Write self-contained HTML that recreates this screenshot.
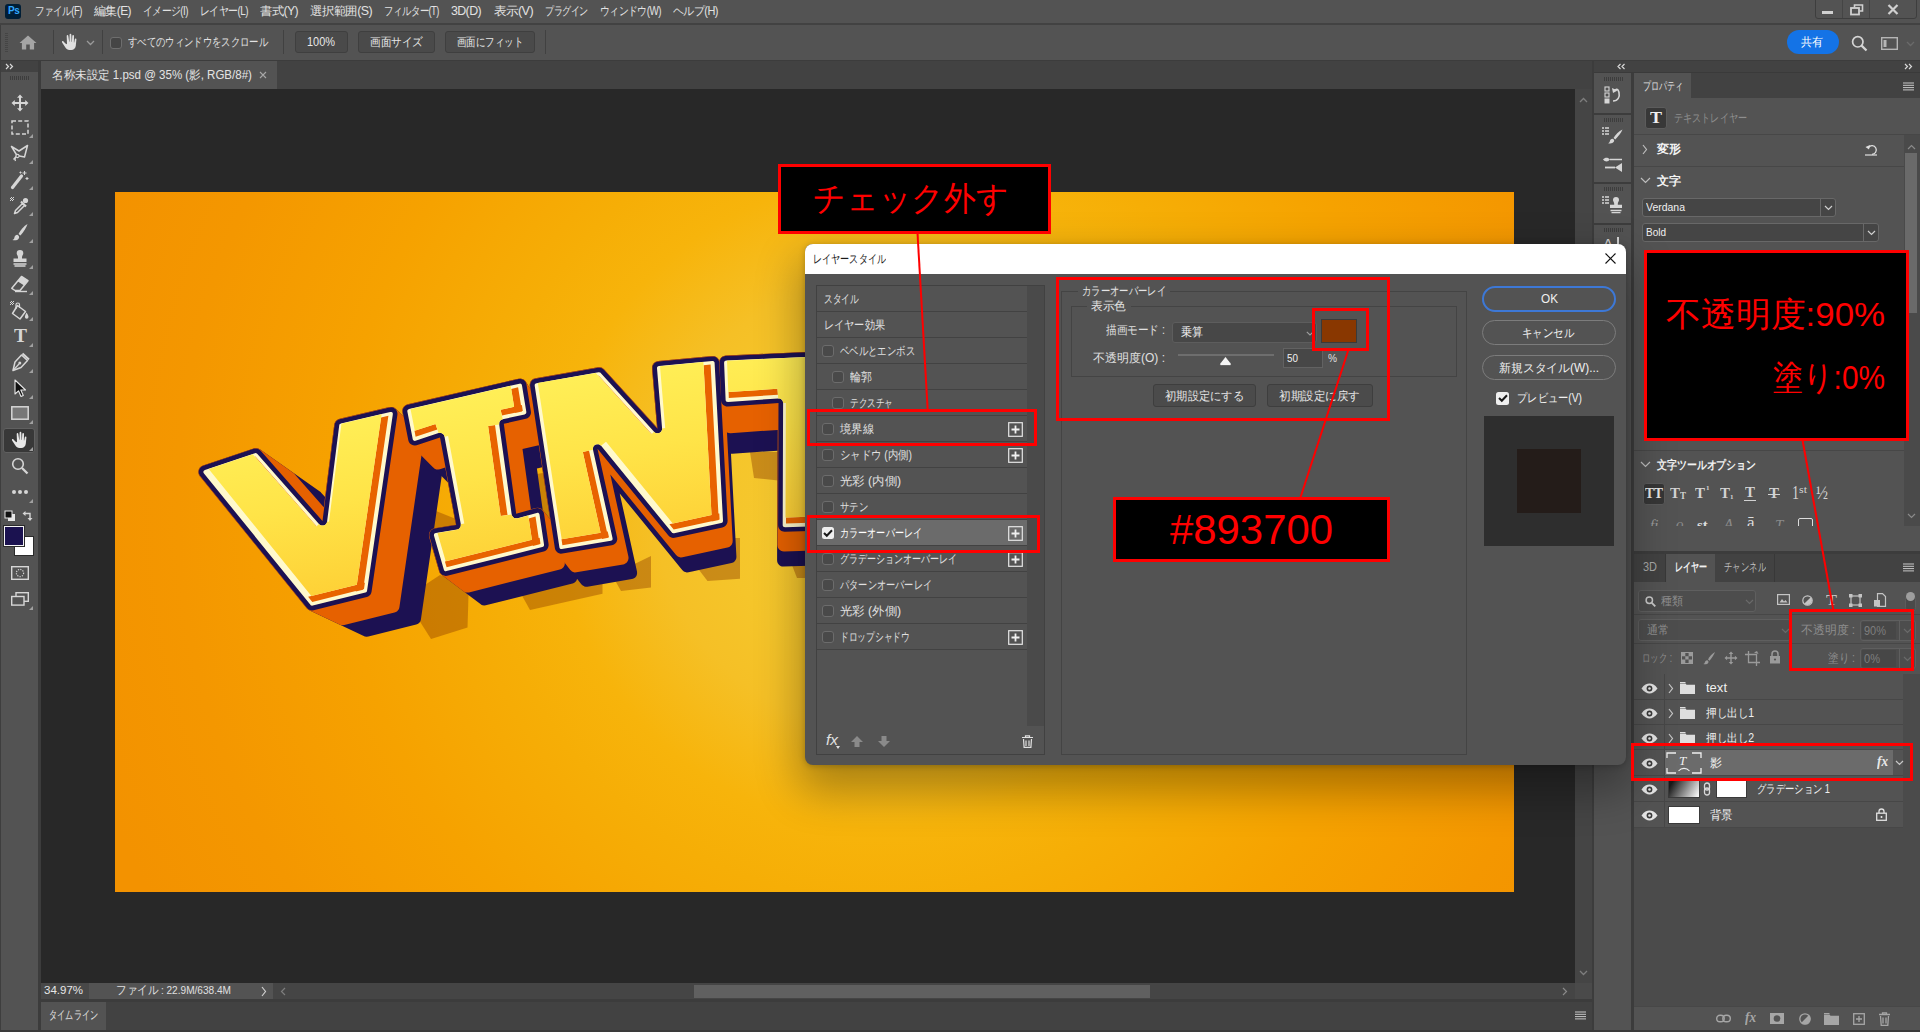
<!DOCTYPE html>
<html lang="ja">
<head>
<meta charset="utf-8">
<title>Photoshop - レイヤースタイル</title>
<style>
*{box-sizing:border-box;margin:0;padding:0}
html,body{width:1920px;height:1032px;overflow:hidden;background:#535353}
body{position:relative;font-family:"Liberation Sans",sans-serif;font-size:12px;color:#dcdcdc;line-height:1}
.a{position:absolute}
.t{position:absolute;white-space:nowrap;transform-origin:0 0;display:block}
svg{position:absolute;overflow:visible}
/* ---------- top bars ---------- */
#menubar{left:0;top:0;width:1920px;height:23px;background:#535353}
#menuline{left:0;top:23px;width:1920px;height:2px;background:#424242}
#optbar{left:0;top:25px;width:1920px;height:35px;background:#535353}
#optline{left:0;top:60px;width:1920px;height:1px;background:#3c3c3c}
#tabbar{left:41px;top:61px;width:1551px;height:28px;background:#424242}
#doctab{left:41px;top:61px;width:236px;height:28px;background:#535353}
.menu{top:5px;font-size:12px;color:#e2e2e2;letter-spacing:-0.6px}
/* ---------- left toolbar ---------- */
#tools{left:0;top:61px;width:38px;height:971px;background:#535353}
#toolshead{left:0;top:61px;width:38px;height:11px;background:#424242}
#toolgap{left:38px;top:61px;width:3px;height:971px;background:#3c3c3c}
/* ---------- canvas ---------- */
#canvas{left:41px;top:89px;width:1534px;height:894px;background:#282828;overflow:hidden}
#doc{left:74px;top:103px;width:1399px;height:700px;overflow:hidden;
 background:radial-gradient(circle 900px at 765px 312px,#f6cc35 0%,#f5c52a 18%,#f5c026 25%,#f7b40b 36%,#f6ae06 44%,#f6a200 60%,#f49700 78%,#f39200 92%)}
#vscroll{left:1575px;top:89px;width:17px;height:894px;background:#454545}
#status{left:41px;top:983px;width:1551px;height:16px;background:#454545}
#statusgap{left:41px;top:999px;width:1551px;height:3px;background:#3c3c3c}
#timeline{left:41px;top:1002px;width:1551px;height:28px;background:#424242}
#bottomline{left:0;top:1030px;width:1920px;height:2px;background:#3a3a3a}
/* ---------- right ---------- */
#rgap1{left:1592px;top:61px;width:2px;height:971px;background:#3c3c3c}
#iconstrip{left:1594px;top:61px;width:37px;height:971px;background:#535353}
#rgap2{left:1631px;top:61px;width:3px;height:971px;background:#3c3c3c}
#rpanel{left:1634px;top:61px;width:286px;height:971px;background:#535353}
/* ---------- annotations ---------- */
.ann{position:absolute;background:#000;border:3px solid #ff0000;color:#ff0000}
.rr{position:absolute;border:3px solid #ff0000}
</style>
</head>
<body>
<!-- ================= TOP BARS ================= -->
<div class="a" id="menubar"></div>
<div class="a" id="menuline"></div>
<div class="a" id="optbar"></div>
<div class="a" id="optline"></div>
<div class="a" id="tabbar"></div>
<div class="a" id="doctab"></div>
<!--MENU-->
<!-- Ps logo -->
<div class="a" style="left:5px;top:4px;width:16px;height:15px;background:#001e36;border-radius:3px"></div>
<span class="t" style="left:8px;top:6px;font-size:10px;font-weight:bold;color:#31a8ff;letter-spacing:-0.3px">Ps</span>
<!-- menu items -->
<span class="t menu" style="left:35px;--w:47;transform:scaleX(0.795)">ファイル(F)</span>
<span class="t menu" style="left:94px;--w:37;transform:scaleX(1.000)">編集(E)</span>
<span class="t menu" style="left:143px;--w:45;transform:scaleX(0.816)">イメージ(I)</span>
<span class="t menu" style="left:200px;--w:48;transform:scaleX(0.821)">レイヤー(L)</span>
<span class="t menu" style="left:260px;--w:38;transform:scaleX(1.027)">書式(Y)</span>
<span class="t menu" style="left:310px;--w:62;transform:scaleX(1.037)">選択範囲(S)</span>
<span class="t menu" style="left:384px;--w:55;transform:scaleX(0.780)">フィルター(T)</span>
<span class="t menu" style="left:451px;--w:30;transform:scaleX(1.034)">3D(D)</span>
<span class="t menu" style="left:494px;--w:39;transform:scaleX(1.054)">表示(V)</span>
<span class="t menu" style="left:545px;--w:43;transform:scaleX(0.754)">プラグイン</span>
<span class="t menu" style="left:600px;--w:61;transform:scaleX(0.818)">ウィンドウ(W)</span>
<span class="t menu" style="left:673px;--w:45;transform:scaleX(0.917)">ヘルプ(H)</span>
<!-- window buttons -->
<div class="a" style="left:1815px;top:-2px;width:102px;height:21px;border:1px solid #3e3e3e;border-radius:0 0 3px 3px"></div>
<div class="a" style="left:1842px;top:0;width:1px;height:18px;background:#454545"></div>
<div class="a" style="left:1869px;top:0;width:1px;height:18px;background:#454545"></div>
<div class="a" style="left:1822px;top:11px;width:11px;height:3px;background:#d0d0d0"></div>
<svg style="left:1850px;top:4px" width="14" height="12" viewBox="0 0 14 12"><path d="M4.5 3.5V1h8v6h-3" fill="none" stroke="#d0d0d0" stroke-width="1.6"/><rect x="1" y="4" width="8" height="6.5" fill="none" stroke="#d0d0d0" stroke-width="1.8"/></svg>
<svg style="left:1887px;top:4px" width="12" height="11" viewBox="0 0 12 11"><path d="M1.5 1l9 9M10.5 1l-9 9" stroke="#d0d0d0" stroke-width="2.2" fill="none"/></svg>
<!-- options bar -->
<div class="a" style="left:5px;top:33px;width:3px;height:20px;background:repeating-linear-gradient(#434343 0 1px,transparent 1px 2px);opacity:.9"></div>
<svg style="left:19px;top:35px" width="18" height="15" viewBox="0 0 18 15"><path d="M9 0.5L0.5 8h2.4v6.5h4.3V9.6h3.6v4.9h4.3V8h2.4z" fill="#a5a5a5"/></svg>
<div class="a" style="left:53px;top:30px;width:1px;height:24px;background:#414141"></div>
<svg style="left:61px;top:33px" width="18" height="18" viewBox="0 0 18 18"><path d="M4.4 10.6L2.3 8.3C1.6 7.6.5 8.5 1.1 9.4l3.3 5.2c.9 1.5 2.2 2.4 4 2.4h1.9c2.5 0 4.2-1.8 4.5-4.3l.6-6.3c.1-1.1-1.4-1.3-1.6-.2l-.6 3.2h-.3l.1-6.6c0-1.1-1.6-1.2-1.7 0l-.4 6.1h-.3L10.300 1.600c0-1.200-1.700-1.200-1.700 0l-.1 7.200h-.3L7.300 2.800c-.1-1.100-1.700-1-1.600.1l.3 8.400z" fill="#e0e0e0"/></svg>
<svg style="left:86px;top:40px" width="9" height="6" viewBox="0 0 9 6"><path d="M1 1l3.500 3.500L8 1" stroke="#9a9a9a" stroke-width="1.300" fill="none"/></svg>
<div class="a" style="left:102px;top:30px;width:1px;height:24px;background:#414141"></div>
<div class="a" style="left:110px;top:37px;width:12px;height:12px;background:#454545;border:1px solid #6e6e6e;border-radius:3px"></div>
<span class="t" style="left:128px;top:36px;font-size:12px;color:#e2e2e2;--w:140;transform:scaleX(0.778)">すべてのウィンドウをスクロール</span>
<div class="a" style="left:283px;top:30px;width:1px;height:24px;background:#414141"></div>
<div class="a" style="left:295px;top:31px;width:53px;height:22px;background:#4a4a4a;border:1px solid #3f3f3f;border-radius:3px"></div>
<span class="t" style="left:307px;top:36px;font-size:12px;color:#e8e8e8;--w:28;transform:scaleX(0.912)">100%</span>
<div class="a" style="left:358px;top:31px;width:77px;height:22px;background:#4a4a4a;border:1px solid #3f3f3f;border-radius:3px"></div>
<span class="t" style="left:370px;top:36px;font-size:12px;color:#e8e8e8;--w:53;transform:scaleX(0.883)">画面サイズ</span>
<div class="a" style="left:445px;top:31px;width:90px;height:22px;background:#4a4a4a;border:1px solid #3f3f3f;border-radius:3px"></div>
<span class="t" style="left:457px;top:36px;font-size:12px;color:#e8e8e8;--w:66;transform:scaleX(0.786)">画面にフィット</span>
<div class="a" style="left:545px;top:30px;width:1px;height:24px;background:#414141"></div>
<!-- share / search / workspace -->
<div class="a" style="left:1787px;top:30px;width:52px;height:24px;background:#1473e6;border-radius:12px"></div>
<span class="t" style="left:1801px;top:36px;font-size:12px;color:#fff;--w:22;transform:scaleX(0.917)">共有</span>
<svg style="left:1851px;top:35px" width="17" height="17" viewBox="0 0 17 17"><circle cx="6.800" cy="6.800" r="5.200" fill="none" stroke="#d5d5d5" stroke-width="1.700"/><path d="M10.600 10.600L15.500 15.500" stroke="#d5d5d5" stroke-width="2.200"/></svg>
<svg style="left:1881px;top:37px" width="17" height="13" viewBox="0 0 17 13"><rect x=".7" y=".7" width="15.600" height="11.600" fill="none" stroke="#b5b5b5" stroke-width="1.400"/><rect x="2.500" y="3" width="3" height="7" fill="#b5b5b5"/></svg>
<svg style="left:1906px;top:41px" width="9" height="6" viewBox="0 0 9 6"><path d="M1 1l3.500 3.500L8 1" stroke="#6a6a6a" stroke-width="1.300" fill="none"/></svg>
<!-- document tab -->
<span class="t" style="left:52px;top:69px;font-size:12px;color:#e4e4e4;--w:200;transform:scaleX(0.960)">名称未設定 1.psd @ 35% (影, RGB/8#)</span>
<svg style="left:259px;top:71px" width="8" height="8" viewBox="0 0 8 8"><path d="M1 1l6 6M7 1l-6 6" stroke="#a8a8a8" stroke-width="1.100"/></svg>

<!--/MENU-->

<!-- ================= LEFT TOOLBAR ================= -->
<div class="a" id="tools"></div>
<div class="a" id="toolshead"></div>
<div class="a" id="toolgap"></div>
<!--TOOLS-->
<div class="a" style="left:0;top:25px;width:1px;height:1007px;background:#3e3e3e"></div>
<svg style="left:5px;top:63px" width="9" height="7" viewBox="0 0 9 7"><path d="M1 1l2.500 2.500L1 6M5 1l2.500 2.500L5 6" stroke="#d8d8d8" stroke-width="1.200" fill="none"/></svg>
<div class="a" style="left:10px;top:76px;width:19px;height:4px;background:repeating-linear-gradient(90deg,#3d3d3d 0 1px,transparent 1px 2px)"></div>

<!-- move -->
<svg style="left:11px;top:94px" width="18" height="18" viewBox="0 0 18 18"><path d="M9 .5l3 3.300H10v4.200h4.200V6l3.300 3-3.300 3v-2H10v4.200h2l-3 3.300-3-3.300h2V10H3.800v2L.5 9l3.300-3v2H8V3.800H6z" fill="#d6d6d6"/></svg>
<!-- marquee -->
<svg style="left:11px;top:120px" width="18" height="15" viewBox="0 0 18 15"><rect x="1" y="1" width="16" height="13" fill="none" stroke="#d6d6d6" stroke-width="1.500" stroke-dasharray="4 2.200"/></svg>
<!-- lasso -->
<svg style="left:10px;top:144px" width="20" height="19" viewBox="0 0 20 19"><path d="M1.500 2.500l7.500 4.500 8.500-5.500-3 11.500-7.500-1.500z" fill="none" stroke="#d6d6d6" stroke-width="1.500" stroke-linejoin="round"/><path d="M7 11.500c-1.500 1.500-2.500 3.500-1.500 5.500M7 11.500l-3.500 4" stroke="#d6d6d6" stroke-width="1.300" fill="none"/><circle cx="7.500" cy="12" r="1.600" fill="#535353" stroke="#d6d6d6" stroke-width="1.100"/></svg>
<!-- magic wand -->
<svg style="left:10px;top:170px" width="20" height="20" viewBox="0 0 20 20"><path d="M2.500 17.500l9-11.500" stroke="#d6d6d6" stroke-width="3.200" stroke-linecap="round"/><path d="M14.500 1v4M12.500 3h4M17 7v3M15.500 8.500h3M10.500 1.500v2M9.500 2.500h2" stroke="#d6d6d6" stroke-width="1.100"/></svg>
<!-- eyedropper -->
<svg style="left:8px;top:196px" width="22" height="20" viewBox="0 0 22 20"><path d="M3 1h1v1H3zM5 1h1v1H5zM2 2h1v1H2zM4 2h1v1H4zM3 3h1v1H3zM5 3h1v1H5zM2 4h1v1H2zM4 4h1v1H4z" fill="#d6d6d6"/><path d="M6.500 17.500l1-3 7-7 2 2-7 7z" fill="none" stroke="#d6d6d6" stroke-width="1.500" stroke-linejoin="round"/><path d="M13 5.500l5 5" stroke="#d6d6d6" stroke-width="2.200"/><circle cx="17.500" cy="4.500" r="2.600" fill="#d6d6d6"/></svg>
<!-- brush -->
<svg style="left:11px;top:223px" width="18" height="18" viewBox="0 0 18 18"><path d="M16.500 1c-3.500 2-7 6-9 10l2 1.500c3-3.500 6-8 7-11.500z" fill="#d6d6d6"/><path d="M6.500 11.800c-2 .2-3 1.500-3.200 3.200-.2 1-1 1.700-2 2 2.500.8 5.500.3 6.600-1.800.6-1.300 0-2.600-1.400-3.400z" fill="#d6d6d6"/></svg>
<!-- stamp -->
<svg style="left:11px;top:249px" width="18" height="18" viewBox="0 0 18 18"><path d="M9 1a3.300 3.300 0 0 1 3.300 3.300c0 1.500-1.300 2.500-1.300 4v1.200h4.500v3.500h-13V9.500H7V8.300c0-1.500-1.300-2.500-1.300-4A3.300 3.300 0 0 1 9 1z" fill="#d6d6d6"/><path d="M2.500 15h13M3.500 17h11" stroke="#d6d6d6" stroke-width="1.300"/></svg>
<!-- eraser -->
<svg style="left:10px;top:275px" width="20" height="18" viewBox="0 0 20 18"><path d="M11.500 1.500l6.500 4.200-8 9.800H5l-3.200-2.200z" fill="none" stroke="#d6d6d6" stroke-width="1.500" stroke-linejoin="round"/><path d="M11.500 1.500l6.500 4.200-3.800 4.700-6.700-4.200z" fill="#d6d6d6"/><path d="M5 16.500h12" stroke="#d6d6d6" stroke-width="1.400"/></svg>
<!-- paint bucket -->
<svg style="left:8px;top:300px" width="22" height="20" viewBox="0 0 22 20"><path d="M3 1h1v1H3zM5 1h1v1H5zM2 2h1v1H2zM4 2h1v1H4zM3 3h1v1H3zM5 3h1v1H5zM2 4h1v1H2zM4 4h1v1H4z" fill="#d6d6d6"/><path d="M9.500 5.500l8 6-5.500 7.500-7.500-5.500z" fill="none" stroke="#d6d6d6" stroke-width="1.500" stroke-linejoin="round"/><path d="M8 9V4.500c0-2 3.500-2 3.500 0V8" fill="none" stroke="#d6d6d6" stroke-width="1.200"/><path d="M18.500 12.500c1.500 2.200 2 3.500 2 4.500a1.800 1.800 0 0 1-3.600 0c0-1 .5-2.300 1.600-4.500z" fill="#d6d6d6"/></svg>
<!-- type -->
<span class="t" style="left:14px;top:326px;font-family:'Liberation Serif',serif;font-weight:bold;font-size:19px;color:#d6d6d6;--w:13;transform:scaleX(1.025)">T</span>
<!-- pen -->
<svg style="left:11px;top:352px" width="19" height="20" viewBox="0 0 19 20"><path d="M2 18.500l2-8.500 6.500-7 6 5.500-6.500 7z" fill="none" stroke="#d6d6d6" stroke-width="1.500" stroke-linejoin="round"/><path d="M2 18.500l6-6.500" stroke="#d6d6d6" stroke-width="1.200"/><circle cx="8.800" cy="11" r="1.500" fill="#d6d6d6"/><path d="M11.500 1.500l6.500 6" stroke="#d6d6d6" stroke-width="2"/></svg>
<!-- path select arrow -->
<svg style="left:13px;top:379px" width="14" height="19" viewBox="0 0 14 19"><path d="M2 1v14l3.500-3.200 2.500 5.700 2.300-1-2.500-5.500H12.500z" fill="#111" stroke="#e6e6e6" stroke-width="1.100" stroke-linejoin="round"/></svg>
<!-- rectangle -->
<svg style="left:11px;top:406px" width="18" height="15" viewBox="0 0 18 15"><rect x=".8" y=".8" width="16.400" height="12.400" fill="#777" stroke="#d6d6d6" stroke-width="1.500"/></svg>
<!-- hand (selected) -->
<div class="a" style="left:3px;top:428px;width:32px;height:25px;background:#383838;border:1px solid #606060;border-radius:3px"></div>
<svg style="left:11px;top:431px" width="18" height="18" viewBox="0 0 18 18"><path d="M4.400 10.600L2.300 8.300C1.600 7.600.5 8.500 1.100 9.400l3.300 5.200c.9 1.500 2.200 2.400 4 2.400h1.900c2.500 0 4.200-1.800 4.500-4.300l.6-6.300c.1-1.100-1.400-1.300-1.600-.2l-.6 3.200h-.3l.1-6.600c0-1.100-1.600-1.200-1.700 0l-.4 6.100h-.3L10.300 1.600c0-1.200-1.700-1.200-1.700 0l-.1 7.200h-.3L7.300 2.800c-.1-1.100-1.700-1-1.600.1l.3 8.400z" fill="#e8e8e8"/></svg>
<!-- zoom -->
<svg style="left:11px;top:457px" width="18" height="18" viewBox="0 0 18 18"><circle cx="7" cy="7" r="5.300" fill="none" stroke="#d6d6d6" stroke-width="1.600"/><path d="M11 11l5.500 5.500" stroke="#d6d6d6" stroke-width="2.300"/></svg>
<!-- dots -->
<svg style="left:11px;top:489px" width="18" height="6" viewBox="0 0 18 6"><circle cx="3" cy="3" r="2" fill="#d6d6d6"/><circle cx="9" cy="3" r="2" fill="#d6d6d6"/><circle cx="15" cy="3" r="2" fill="#d6d6d6"/></svg>
<!-- small default/swap -->
<svg style="left:4px;top:510px" width="12" height="12" viewBox="0 0 12 12"><rect x="4" y="4" width="7" height="7" fill="#e8e8e8"/><rect x="1" y="1" width="7" height="7" fill="#111" stroke="#e8e8e8" stroke-width="1"/></svg>
<svg style="left:21px;top:510px" width="12" height="12" viewBox="0 0 12 12"><path d="M3.500 3.500H9V9" fill="none" stroke="#d6d6d6" stroke-width="1.400"/><path d="M4.500 1L1.500 3.500l3 2.500zM6.500 8L9 11l2.500-3z" fill="#d6d6d6"/></svg>
<!-- fg / bg -->
<div class="a" style="left:14px;top:536px;width:20px;height:20px;background:#fff;border:1px solid #2b2b2b"></div>
<div class="a" style="left:4px;top:526px;width:20px;height:20px;background:#1b1250;border:1.500px solid #f2f2f2;outline:1px solid #2b2b2b"></div>
<!-- quick mask -->
<svg style="left:11px;top:566px" width="18" height="14" viewBox="0 0 18 14"><rect x=".7" y=".7" width="16.600" height="12.600" fill="none" stroke="#d6d6d6" stroke-width="1.400"/><circle cx="9" cy="7" r="3.600" fill="none" stroke="#d6d6d6" stroke-width="1.200" stroke-dasharray="1.200 1.200"/></svg>
<!-- screen mode -->
<svg style="left:11px;top:592px" width="18" height="14" viewBox="0 0 18 14"><rect x="5" y=".7" width="12.300" height="8.600" fill="none" stroke="#d6d6d6" stroke-width="1.400"/><rect x=".7" y="4.500" width="12.300" height="8.600" fill="#535353" stroke="#d6d6d6" stroke-width="1.400"/></svg>

<svg style="left:29px;top:134px" width="4" height="4" viewBox="0 0 4 4"><path d="M4 0v4H0z" fill="#a0a0a0"/></svg>
<svg style="left:29px;top:160px" width="4" height="4" viewBox="0 0 4 4"><path d="M4 0v4H0z" fill="#a0a0a0"/></svg>
<svg style="left:29px;top:186px" width="4" height="4" viewBox="0 0 4 4"><path d="M4 0v4H0z" fill="#a0a0a0"/></svg>
<svg style="left:29px;top:212px" width="4" height="4" viewBox="0 0 4 4"><path d="M4 0v4H0z" fill="#a0a0a0"/></svg>
<svg style="left:29px;top:239px" width="4" height="4" viewBox="0 0 4 4"><path d="M4 0v4H0z" fill="#a0a0a0"/></svg>
<svg style="left:29px;top:265px" width="4" height="4" viewBox="0 0 4 4"><path d="M4 0v4H0z" fill="#a0a0a0"/></svg>
<svg style="left:29px;top:291px" width="4" height="4" viewBox="0 0 4 4"><path d="M4 0v4H0z" fill="#a0a0a0"/></svg>
<svg style="left:29px;top:317px" width="4" height="4" viewBox="0 0 4 4"><path d="M4 0v4H0z" fill="#a0a0a0"/></svg>
<svg style="left:29px;top:343px" width="4" height="4" viewBox="0 0 4 4"><path d="M4 0v4H0z" fill="#a0a0a0"/></svg>
<svg style="left:29px;top:369px" width="4" height="4" viewBox="0 0 4 4"><path d="M4 0v4H0z" fill="#a0a0a0"/></svg>
<svg style="left:29px;top:395px" width="4" height="4" viewBox="0 0 4 4"><path d="M4 0v4H0z" fill="#a0a0a0"/></svg>
<svg style="left:29px;top:420px" width="4" height="4" viewBox="0 0 4 4"><path d="M4 0v4H0z" fill="#a0a0a0"/></svg>
<svg style="left:29px;top:447px" width="4" height="4" viewBox="0 0 4 4"><path d="M4 0v4H0z" fill="#a0a0a0"/></svg>
<svg style="left:29px;top:499px" width="4" height="4" viewBox="0 0 4 4"><path d="M4 0v4H0z" fill="#a0a0a0"/></svg>
<svg style="left:29px;top:606px" width="4" height="4" viewBox="0 0 4 4"><path d="M4 0v4H0z" fill="#a0a0a0"/></svg>

<!--/TOOLS-->

<!-- ================= CANVAS ================= -->
<div class="a" id="canvas">
  <div class="a" id="doc">
<!--ART-->
<svg class="a" style="left:0;top:0" width="1399" height="700" viewBox="115 192 1399 700">
<defs><linearGradient id="fg" gradientUnits="userSpaceOnUse" x1="500" y1="352" x2="545" y2="612"><stop offset="0" stop-color="#fff35d"/><stop offset="0.45" stop-color="#ffe448"/><stop offset="1" stop-color="#fdc62c"/></linearGradient></defs>
<g fill="#8f3d00" fill-opacity="0.42"><path d="M405.0,598.0 431.0,639.0 467.5,627.5 468.8,585.0 440.0,575.0Z"/><path d="M416.0,503.0 456.0,519.0 453.0,536.0 424.0,546.0Z"/><path d="M520.0,592.0 530.0,610.0 602.5,593.8 602.5,572.0 560.0,578.0Z"/><path d="M537.0,474.0 548.0,472.0 552.0,523.0 541.0,525.0Z"/><path d="M612.0,575.0 621.0,591.0 651.0,587.5 651.0,556.0Z"/><path d="M696.0,566.0 707.5,581.0 740.0,578.8 740.0,538.0 728.0,538.0Z"/><path d="M750.0,452.0 783.0,452.0 783.0,481.0 754.0,478.0Z"/><path d="M790.0,560.0 860.0,560.0 860.0,578.0 797.0,578.0Z"/></g>
<path fill="#1c1152" d="M200.0,467.5 200.0,467.5 199.9,467.5 199.9,467.5 199.0,469.1 198.9,469.1 198.9,469.1 198.9,469.2 198.4,470.9 198.4,470.9 198.4,470.9 198.4,471.0 198.4,472.8 198.4,472.8 198.4,472.8 198.4,472.9 198.9,474.6 198.9,474.6 198.9,474.7 198.9,474.7 199.8,476.2 199.9,476.3 306.7,608.2 306.7,608.2 308.1,609.5 308.1,609.5 308.1,609.5 308.2,609.6 309.8,610.4 309.8,610.4 364.8,636.4 364.8,636.4 364.9,636.4 364.9,636.4 366.5,636.7 366.6,636.7 366.6,636.7 366.7,636.7 368.3,636.5 368.4,636.5 416.2,624.6 416.2,624.6 417.5,624.1 417.6,624.1 417.6,624.1 418.7,623.3 418.8,623.3 418.8,623.3 419.7,622.2 419.8,622.2 419.8,622.2 420.5,620.9 420.5,620.9 420.5,620.9 420.9,619.5 420.9,619.5 444.0,460.3 444.0,460.2 444.1,458.6 444.1,458.6 444.1,458.5 444.0,458.5 443.6,456.9 443.6,456.9 443.6,456.9 443.6,456.8 442.7,455.5 442.7,455.4 442.7,455.4 396.2,409.3 396.2,409.3 394.9,408.1 394.9,408.1 394.8,408.1 394.8,408.1 393.2,407.2 393.2,407.2 393.1,407.2 393.1,407.2 391.3,406.9 391.3,406.9 391.3,406.9 391.2,406.9 389.4,407.0 389.4,407.1 339.5,418.8 339.4,418.9 338.0,419.4 337.9,419.4 337.9,419.4 336.6,420.3 336.5,420.4 336.5,420.4 335.5,421.6 335.4,421.6 335.4,421.6 334.7,423.0 334.6,423.1 334.6,423.1 334.2,424.6 334.2,424.7 325.1,497.1 320.9,492.4 320.9,492.3 319.6,491.2 319.5,491.2 259.5,449.1 259.4,449.1 259.4,449.1 257.6,448.3 257.6,448.3 257.6,448.3 257.5,448.3 255.6,448.1 255.6,448.1 255.6,448.1 255.5,448.1 253.7,448.4 253.6,448.4 203.0,465.4 203.0,465.4 201.4,466.2 201.4,466.2 201.3,466.2 201.3,466.3Z"/>
<path fill="#1c1152" d="M402.3,410.5 402.3,410.6 402.3,410.6 402.3,410.6 402.4,412.3 402.4,412.3 407.9,440.4 407.9,440.4 408.5,442.1 408.5,442.2 408.5,442.2 408.5,442.2 409.6,443.7 409.6,443.8 409.6,443.8 447.9,482.4 455.8,524.7 434.6,528.2 434.6,528.2 432.8,528.8 432.8,528.8 432.8,528.8 432.7,528.8 431.2,529.8 431.2,529.8 431.2,529.9 431.1,529.9 430.0,531.3 429.9,531.3 429.9,531.3 429.9,531.4 429.2,533.0 429.1,533.1 429.1,533.1 429.1,533.1 428.9,534.9 428.9,535.0 428.9,535.0 428.9,535.1 429.1,536.9 429.1,536.9 439.1,571.3 439.1,571.3 439.8,572.9 439.8,572.9 439.8,572.9 439.8,572.9 440.9,574.3 440.9,574.3 440.9,574.3 440.9,574.3 442.2,575.3 442.2,575.3 481.1,604.6 481.1,604.6 481.2,604.7 481.2,604.7 482.6,605.2 482.6,605.3 482.6,605.3 482.7,605.3 484.1,605.5 484.2,605.5 484.2,605.5 484.2,605.5 485.7,605.3 485.8,605.3 572.5,583.5 572.6,583.5 573.9,583.0 573.9,583.0 574.0,582.9 574.0,582.9 575.2,582.1 575.2,582.1 575.2,582.1 575.2,582.0 576.2,580.9 576.2,580.9 576.2,580.9 576.2,580.9 576.9,579.6 576.9,579.6 576.9,579.5 576.9,579.5 577.2,578.1 577.2,578.1 577.2,578.0 577.2,578.0 577.2,576.6 577.2,576.5 573.1,549.0 573.1,549.0 572.6,547.4 572.6,547.3 572.6,547.3 572.6,547.3 571.7,545.9 571.6,545.9 542.8,510.1 542.8,510.1 542.7,510.0 542.7,510.0 536.9,468.5 556.5,464.1 556.6,464.1 557.9,463.6 558.0,463.6 558.0,463.6 558.0,463.5 559.2,462.7 559.3,462.7 559.3,462.7 559.3,462.6 560.3,461.5 560.3,461.5 560.3,461.5 560.3,461.4 561.0,460.1 561.0,460.1 561.0,460.1 561.0,460.0 561.4,458.6 561.4,458.6 561.4,458.5 561.4,458.5 561.3,457.0 561.3,457.0 557.3,432.7 557.3,432.6 556.9,431.1 556.9,431.1 556.8,431.0 556.8,431.0 526.3,382.5 526.3,382.5 525.4,381.0 525.3,381.0 525.3,380.9 525.3,380.9 524.0,379.7 523.9,379.7 523.9,379.7 523.9,379.7 522.3,378.9 522.3,378.9 522.2,378.9 522.2,378.9 520.5,378.5 520.4,378.5 520.4,378.5 520.4,378.5 518.6,378.7 518.5,378.7 407.6,404.3 407.6,404.3 406.0,404.9 406.0,404.9 406.0,404.9 405.9,404.9 404.6,405.9 404.5,405.9 404.5,405.9 404.5,406.0 403.4,407.2 403.4,407.3 403.4,407.3 403.4,407.3 402.6,408.8 402.6,408.8 402.6,408.9 402.6,408.9Z"/>
<path fill="#1c1152" d="M656.5,361.5 656.5,361.5 656.4,361.5 656.4,361.5 654.9,362.3 654.9,362.3 654.9,362.3 654.8,362.4 653.6,363.5 653.6,363.5 653.5,363.5 653.5,363.6 652.6,365.0 652.6,365.0 652.6,365.1 652.6,365.1 652.1,366.7 652.1,366.7 652.0,366.8 652.0,366.8 652.0,368.5 652.0,368.5 657.0,427.6 604.2,369.5 604.2,369.5 603.0,368.4 602.9,368.4 602.9,368.4 602.9,368.3 601.4,367.6 601.4,367.6 601.4,367.6 601.3,367.6 599.7,367.3 599.7,367.3 599.7,367.3 599.6,367.3 598.0,367.3 597.9,367.3 535.4,378.3 535.3,378.3 533.7,378.8 533.7,378.8 533.7,378.8 533.6,378.8 532.2,379.7 532.2,379.8 532.2,379.8 532.1,379.8 531.0,381.0 531.0,381.1 531.0,381.1 530.9,381.1 530.1,382.6 530.1,382.6 530.1,382.6 530.1,382.7 529.7,384.3 529.7,384.3 529.7,384.4 529.7,384.4 529.7,386.1 529.7,386.1 554.5,548.3 554.5,548.3 555.0,550.0 555.0,550.0 555.0,550.0 555.0,550.1 555.9,551.5 555.9,551.6 581.5,584.4 581.5,584.5 581.6,584.5 582.7,585.5 582.7,585.6 582.7,585.6 582.8,585.6 584.1,586.3 584.2,586.3 584.2,586.4 584.2,586.4 585.7,586.7 585.8,586.7 585.8,586.7 585.8,586.7 587.4,586.7 587.4,586.7 631.9,579.1 632.0,579.1 633.5,578.6 633.5,578.6 633.6,578.6 633.6,578.6 634.9,577.7 634.9,577.7 635.0,577.7 635.0,577.7 636.0,576.5 636.1,576.5 636.1,576.4 636.1,576.4 636.8,575.0 636.8,575.0 636.8,574.9 636.8,574.9 637.1,573.3 637.1,573.3 637.1,573.3 637.1,573.2 637.0,571.7 637.0,571.6 619.7,493.4 682.4,570.2 682.5,570.2 683.6,571.3 683.7,571.3 683.7,571.4 683.7,571.4 685.2,572.1 685.2,572.1 685.2,572.1 685.3,572.1 686.8,572.5 686.9,572.5 686.9,572.5 686.9,572.5 688.5,572.3 688.6,572.3 731.5,563.0 731.5,563.0 733.1,562.4 733.1,562.4 733.2,562.4 733.2,562.4 734.5,561.4 734.5,561.4 734.6,561.4 734.6,561.3 735.6,560.0 735.6,560.0 735.6,560.0 735.6,559.9 736.2,558.4 736.2,558.4 736.3,558.3 736.3,558.3 736.4,556.7 736.4,556.6 728.9,414.3 728.9,414.3 719.6,362.5 719.6,362.5 719.3,360.8 719.3,360.8 719.3,360.7 719.3,360.7 718.5,359.1 718.5,359.1 718.5,359.1 718.4,359.1 717.3,357.8 717.3,357.7 717.2,357.7 717.2,357.7 715.7,356.7 715.7,356.7 715.7,356.7 715.6,356.7 714.0,356.2 714.0,356.1 713.9,356.1 713.9,356.1 712.1,356.1 712.1,356.1 658.2,361.1 658.2,361.1Z"/>
<path fill="#1c1152" d="M719.3,360.9 719.3,361.0 719.3,361.0 719.3,361.0 719.1,362.7 719.1,362.8 720.6,400.3 720.6,400.3 725.7,447.9 725.7,447.9 726.0,449.4 726.0,449.5 726.0,449.5 726.0,449.5 726.7,451.0 726.7,451.0 726.7,451.0 726.7,451.0 727.7,452.2 727.8,452.3 727.8,452.3 727.8,452.3 729.1,453.2 729.1,453.2 729.2,453.2 729.2,453.2 730.7,453.7 730.7,453.7 730.8,453.7 730.8,453.7 732.3,453.8 732.4,453.8 777.4,450.7 777.1,560.3 777.1,560.4 777.3,561.9 777.3,562.0 777.3,562.0 777.3,562.0 777.9,563.5 777.9,563.5 778.0,563.6 778.0,563.6 778.9,564.8 779.0,564.8 779.0,564.9 779.0,564.9 780.3,565.8 780.3,565.8 780.3,565.8 780.4,565.9 781.8,566.4 781.9,566.4 781.9,566.4 781.9,566.5 783.5,566.6 783.5,566.6 834.5,565.0 834.6,565.0 836.1,564.7 836.1,564.7 836.1,564.7 836.2,564.7 837.5,564.1 837.6,564.1 837.6,564.1 837.6,564.0 838.8,563.1 838.8,563.1 838.9,563.0 838.9,563.0 839.8,561.8 839.8,561.8 839.8,561.7 839.8,561.7 840.4,560.3 840.4,560.3 840.4,560.2 847.9,525.1 847.9,525.1 848.1,523.4 848.1,523.4 847.1,448.7 883.0,448.7 883.1,448.7 884.6,448.5 884.6,448.5 884.6,448.5 884.7,448.5 886.1,447.9 886.1,447.9 886.2,447.9 886.2,447.8 887.4,446.9 887.4,446.9 887.4,446.9 887.5,446.8 888.4,445.6 888.4,445.6 888.4,445.6 888.4,445.5 889.0,444.1 889.0,444.1 902.0,396.1 902.0,396.0 902.2,394.3 902.3,394.3 902.4,354.7 902.4,354.7 902.2,352.9 902.1,352.9 902.1,352.9 902.1,352.8 901.4,351.2 901.4,351.2 901.4,351.2 901.4,351.1 900.3,349.8 900.3,349.7 900.2,349.7 900.2,349.7 898.8,348.7 898.8,348.6 898.7,348.6 898.7,348.6 897.1,348.0 897.0,348.0 897.0,348.0 897.0,348.0 895.2,347.8 895.2,347.8 725.7,355.6 725.7,355.6 724.0,355.9 724.0,355.9 723.9,355.9 723.9,355.9 722.4,356.6 722.3,356.7 722.3,356.7 722.3,356.7 721.0,357.8 721.0,357.8 720.9,357.8 720.9,357.9 719.9,359.2 719.9,359.3 719.9,359.3 719.9,359.3Z"/>
<path fill="#e66100" d="M200.0,467.5 200.0,467.5 199.9,467.5 199.9,467.5 199.0,469.1 198.9,469.1 198.9,469.1 198.9,469.2 198.4,470.9 198.4,470.9 198.4,470.9 198.4,471.0 198.4,472.8 198.4,472.8 198.4,472.8 198.4,472.9 198.9,474.6 198.9,474.6 198.9,474.7 198.9,474.7 199.8,476.2 199.9,476.3 306.7,608.2 306.7,608.2 308.1,609.5 308.1,609.5 308.1,609.5 308.2,609.6 309.8,610.4 309.8,610.4 340.6,624.9 340.6,625.0 340.7,625.0 340.7,625.0 342.4,625.3 342.5,625.3 342.5,625.3 342.5,625.3 344.3,625.1 344.3,625.1 394.5,612.6 394.5,612.6 395.9,612.1 395.9,612.1 396.0,612.1 397.2,611.2 397.2,611.2 397.2,611.2 398.2,610.1 398.2,610.1 398.3,610.0 399.0,608.8 399.0,608.7 399.0,608.7 399.4,607.3 399.4,607.2 423.7,440.3 423.7,440.2 423.7,438.5 423.7,438.5 423.7,438.4 423.7,438.4 423.2,436.8 423.2,436.7 423.2,436.7 423.2,436.7 422.3,435.2 422.3,435.2 422.2,435.1 396.2,409.3 396.2,409.3 394.9,408.1 394.9,408.1 394.8,408.1 394.8,408.1 393.2,407.2 393.2,407.2 393.1,407.2 393.1,407.2 391.3,406.9 391.3,406.9 391.3,406.9 391.2,406.9 389.4,407.0 389.4,407.1 339.5,418.8 339.4,418.9 338.0,419.4 337.9,419.4 337.9,419.4 336.6,420.3 336.5,420.4 336.5,420.4 335.5,421.6 335.4,421.6 335.4,421.6 334.7,423.0 334.6,423.1 334.6,423.1 334.2,424.6 334.2,424.7 323.8,507.2 294.5,473.9 294.5,473.9 293.1,472.7 293.1,472.7 259.5,449.1 259.4,449.1 259.4,449.1 257.6,448.3 257.6,448.3 257.6,448.3 257.5,448.3 255.6,448.1 255.6,448.1 255.6,448.1 255.5,448.1 253.7,448.4 253.6,448.4 203.0,465.4 203.0,465.4 201.4,466.2 201.4,466.2 201.3,466.2 201.3,466.3Z"/>
<path fill="#e66100" d="M402.3,410.5 402.3,410.6 402.3,410.6 402.3,410.6 402.4,412.3 402.4,412.3 407.9,440.4 407.9,440.4 408.5,442.1 408.5,442.2 408.5,442.2 408.5,442.2 409.6,443.7 409.6,443.8 409.6,443.8 433.2,467.6 433.3,467.6 434.6,468.7 434.6,468.7 434.7,468.7 434.7,468.7 436.3,469.4 436.3,469.4 436.4,469.4 436.4,469.4 438.1,469.6 438.2,469.6 438.2,469.6 438.3,469.6 440.0,469.3 440.0,469.3 445.2,467.6 455.8,524.7 434.6,528.2 434.6,528.2 432.8,528.8 432.8,528.8 432.8,528.8 432.7,528.8 431.2,529.8 431.2,529.8 431.2,529.9 431.1,529.9 430.0,531.3 429.9,531.3 429.9,531.3 429.9,531.4 429.2,533.0 429.1,533.1 429.1,533.1 429.1,533.1 428.9,534.9 428.9,535.0 428.9,535.0 428.9,535.1 429.1,536.9 429.1,536.9 439.1,571.3 439.1,571.3 439.8,572.9 439.8,572.9 439.8,572.9 439.8,572.9 440.9,574.3 440.9,574.3 440.9,574.3 440.9,574.3 442.2,575.3 442.2,575.3 464.0,591.7 464.0,591.8 464.1,591.8 464.1,591.8 465.5,592.4 465.6,592.4 465.6,592.4 465.6,592.4 467.2,592.6 467.2,592.6 467.3,592.6 467.3,592.6 468.8,592.4 468.9,592.4 559.9,569.6 559.9,569.6 561.3,569.0 561.4,569.0 561.4,569.0 561.4,569.0 562.7,568.1 562.7,568.1 562.7,568.1 562.7,568.0 563.7,566.9 563.7,566.9 563.7,566.8 563.8,566.8 564.4,565.5 564.4,565.4 564.5,565.4 564.5,565.4 564.8,563.9 564.8,563.9 564.8,563.9 564.8,563.8 564.8,562.3 564.8,562.3 560.5,533.4 560.4,533.4 560.0,531.7 559.9,531.7 559.9,531.6 559.9,531.6 559.0,530.2 558.9,530.1 542.8,510.1 542.8,510.1 542.7,510.0 541.4,508.8 541.3,508.8 541.3,508.8 541.3,508.8 539.6,508.0 539.6,508.0 539.5,508.0 539.5,508.0 537.7,507.7 537.7,507.7 537.6,507.7 537.6,507.7 535.8,507.9 535.7,507.9 530.9,509.3 522.5,448.9 543.1,444.3 543.1,444.3 544.6,443.8 544.6,443.8 544.6,443.8 544.7,443.7 545.9,442.9 546.0,442.9 546.0,442.8 546.0,442.8 547.0,441.6 547.1,441.6 547.1,441.6 547.1,441.6 547.8,440.2 547.8,440.2 547.8,440.1 547.8,440.1 548.2,438.6 548.2,438.6 548.2,438.5 548.2,438.5 548.1,436.9 548.1,436.9 544.0,411.4 543.9,411.4 543.4,409.8 543.4,409.7 543.4,409.7 543.4,409.7 526.3,382.5 526.3,382.5 525.4,381.0 525.3,381.0 525.3,380.9 525.3,380.9 524.0,379.7 523.9,379.7 523.9,379.7 523.9,379.7 522.3,378.9 522.3,378.9 522.2,378.9 522.2,378.9 520.5,378.5 520.4,378.5 520.4,378.5 520.4,378.5 518.6,378.7 518.5,378.7 407.6,404.3 407.6,404.3 406.0,404.9 406.0,404.9 406.0,404.9 405.9,404.9 404.6,405.9 404.5,405.9 404.5,405.9 404.5,406.0 403.4,407.2 403.4,407.3 403.4,407.3 403.4,407.3 402.6,408.8 402.6,408.8 402.6,408.9 402.6,408.9Z"/>
<path fill="#e66100" d="M656.5,361.5 656.5,361.5 656.4,361.5 656.4,361.5 654.9,362.3 654.9,362.3 654.9,362.3 654.8,362.4 653.6,363.5 653.6,363.5 653.5,363.5 653.5,363.6 652.6,365.0 652.6,365.0 652.6,365.1 652.6,365.1 652.1,366.7 652.1,366.7 652.0,366.8 652.0,366.8 652.0,368.5 652.0,368.5 657.0,427.6 604.2,369.5 604.2,369.5 603.0,368.4 602.9,368.4 602.9,368.4 602.9,368.3 601.4,367.6 601.4,367.6 601.4,367.6 601.3,367.6 599.7,367.3 599.7,367.3 599.7,367.3 599.6,367.3 598.0,367.3 597.9,367.3 535.4,378.3 535.3,378.3 533.7,378.8 533.7,378.8 533.7,378.8 533.6,378.8 532.2,379.7 532.2,379.8 532.2,379.8 532.1,379.8 531.0,381.0 531.0,381.1 531.0,381.1 530.9,381.1 530.1,382.6 530.1,382.6 530.1,382.6 530.1,382.7 529.7,384.3 529.7,384.3 529.7,384.4 529.7,384.4 529.7,386.1 529.7,386.1 554.5,548.3 554.5,548.3 555.0,550.0 555.0,550.0 555.0,550.0 555.0,550.1 555.9,551.5 555.9,551.6 570.3,570.0 570.3,570.0 570.3,570.0 571.5,571.1 571.5,571.2 571.5,571.2 571.6,571.2 573.0,572.0 573.0,572.0 573.1,572.0 573.1,572.0 574.7,572.4 574.7,572.4 574.7,572.4 574.8,572.4 576.4,572.3 576.4,572.3 623.1,564.4 623.2,564.4 624.8,563.9 624.8,563.9 624.8,563.9 624.8,563.8 626.2,562.9 626.3,562.9 626.3,562.9 626.3,562.9 627.4,561.6 627.4,561.6 627.5,561.6 627.5,561.5 628.2,560.1 628.2,560.0 628.2,560.0 628.2,560.0 628.5,558.3 628.6,558.3 628.6,558.3 628.6,558.2 628.4,556.6 628.4,556.5 610.3,474.5 676.1,555.0 676.1,555.1 677.4,556.2 677.4,556.2 677.4,556.3 677.5,556.3 679.0,557.0 679.0,557.1 679.0,557.1 679.1,557.1 680.7,557.4 680.7,557.4 680.8,557.4 680.8,557.4 682.5,557.3 682.5,557.3 727.5,547.5 727.6,547.5 729.2,546.9 729.3,546.9 729.3,546.9 729.3,546.9 730.7,545.8 730.7,545.8 730.8,545.8 730.8,545.7 731.8,544.4 731.9,544.3 731.9,544.3 731.9,544.3 732.5,542.7 732.5,542.6 732.5,542.6 732.5,542.6 732.7,540.8 732.7,540.8 724.8,391.5 724.8,391.5 719.6,362.5 719.6,362.5 719.3,360.8 719.3,360.8 719.3,360.7 719.3,360.7 718.5,359.1 718.5,359.1 718.5,359.1 718.4,359.1 717.3,357.8 717.3,357.7 717.2,357.7 717.2,357.7 715.7,356.7 715.7,356.7 715.7,356.7 715.6,356.7 714.0,356.2 714.0,356.1 713.9,356.1 713.9,356.1 712.1,356.1 712.1,356.1 658.2,361.1 658.2,361.1Z"/>
<path fill="#e66100" d="M719.3,360.9 719.3,361.0 719.3,361.0 719.3,361.0 719.1,362.7 719.1,362.8 720.6,400.3 720.6,400.3 723.5,427.0 723.5,427.0 723.8,428.6 723.8,428.6 723.8,428.7 723.8,428.7 724.5,430.2 724.5,430.2 724.5,430.2 724.5,430.3 725.6,431.5 725.6,431.5 725.7,431.5 725.7,431.6 727.0,432.5 727.1,432.5 727.1,432.5 727.1,432.5 728.7,433.1 728.7,433.1 728.7,433.1 728.8,433.1 730.4,433.2 730.5,433.2 777.7,429.9 777.4,544.9 777.4,545.0 777.6,546.6 777.6,546.6 777.6,546.7 777.6,546.7 778.2,548.2 778.3,548.2 778.3,548.3 778.3,548.3 779.3,549.6 779.3,549.6 779.4,549.6 779.4,549.7 780.7,550.6 780.7,550.6 780.8,550.7 780.8,550.7 782.3,551.3 782.3,551.3 782.4,551.3 782.4,551.3 784.0,551.5 784.1,551.5 837.6,549.8 837.6,549.8 839.2,549.5 839.2,549.5 839.3,549.5 839.3,549.5 840.7,548.8 840.8,548.8 840.8,548.8 840.8,548.8 842.1,547.8 842.1,547.8 842.1,547.7 842.1,547.7 843.1,546.4 843.1,546.4 843.1,546.4 843.1,546.3 843.7,544.9 843.7,544.8 843.7,544.8 847.9,525.1 847.9,525.1 848.1,523.4 848.1,523.4 846.8,427.8 888.4,427.8 888.5,427.8 890.1,427.6 890.1,427.6 890.2,427.6 890.2,427.5 891.7,426.9 891.7,426.9 891.7,426.9 891.7,426.9 893.0,425.9 893.0,425.9 893.1,425.9 893.1,425.8 894.1,424.6 894.1,424.5 894.1,424.5 894.1,424.5 894.7,423.0 894.8,423.0 902.0,396.1 902.0,396.0 902.2,394.3 902.3,394.3 902.4,354.7 902.4,354.7 902.2,352.9 902.1,352.9 902.1,352.9 902.1,352.8 901.4,351.2 901.4,351.2 901.4,351.2 901.4,351.1 900.3,349.8 900.3,349.7 900.2,349.7 900.2,349.7 898.8,348.7 898.8,348.6 898.7,348.6 898.7,348.6 897.1,348.0 897.0,348.0 897.0,348.0 897.0,348.0 895.2,347.8 895.2,347.8 725.7,355.6 725.7,355.6 724.0,355.9 724.0,355.9 723.9,355.9 723.9,355.9 722.4,356.6 722.3,356.7 722.3,356.7 722.3,356.7 721.0,357.8 721.0,357.8 720.9,357.8 720.9,357.9 719.9,359.2 719.9,359.3 719.9,359.3 719.9,359.3Z"/>
<path fill="#1c1152" d="M203.2,465.8 201.6,466.6 200.2,467.8 199.3,469.3 198.8,471.0 198.8,472.8 199.3,474.5 200.2,476.0 307.0,607.9 308.3,609.2 310.0,610.0 311.8,610.4 313.6,610.2 366.8,597.0 368.2,596.4 369.5,595.5 370.5,594.4 371.2,593.1 371.6,591.6 397.4,414.7 397.4,412.9 396.9,411.2 396.0,409.6 394.6,408.4 393.0,407.6 391.3,407.3 389.5,407.4 339.6,419.2 338.1,419.8 336.8,420.7 335.8,421.8 335.0,423.2 334.6,424.7 322.5,521.0 260.7,450.7 259.2,449.5 257.5,448.7 255.6,448.5 253.7,448.8Z"/>
<path fill="#fff9cc" d="M204.9,470.0 204.2,470.4 203.8,470.7 203.5,471.2 203.4,471.7 203.4,472.2 203.5,472.7 204.0,473.4 310.4,604.8 311.0,605.4 311.5,605.6 312.0,605.7 312.8,605.6 365.4,592.6 366.1,592.3 366.4,592.1 366.7,591.7 366.9,591.3 367.1,590.6 392.8,414.4 392.8,413.5 392.7,413.0 392.4,412.6 392.0,412.2 391.5,412.0 391.0,411.9 390.2,412.0 340.9,423.6 340.2,423.9 339.8,424.1 339.5,424.5 339.3,424.9 339.2,425.6 327.1,521.6 327.0,522.0 326.9,522.5 326.7,522.9 326.5,523.3 326.2,523.7 325.9,524.0 325.6,524.4 325.3,524.7 324.9,524.9 324.5,525.1 324.1,525.3 323.6,525.5 323.2,525.5 322.7,525.6 322.3,525.6 321.8,525.5 321.4,525.5 320.9,525.3 320.5,525.1 320.1,524.9 319.7,524.7 319.4,524.4 319.0,524.0 257.4,454.0 256.8,453.4 256.3,453.2 255.7,453.1 254.9,453.3Z"/>
<path fill="#e86300" d="M316.3,526.4 316.6,526.2 255.4,456.6 255.0,456.7ZM356.8,584.7 308.1,596.8 312.3,601.9 355.8,591.1 355.8,591.5 363.1,589.7 363.2,589.3 364.0,589.1 364.9,582.6 364.1,582.9 388.4,415.8 381.1,417.5Z"/>
<path fill="url(#fg)" d="M327.0,522.0 326.9,522.5 326.7,522.9 326.5,523.3 326.2,523.7 325.9,524.0 325.6,524.4 325.3,524.7 324.9,524.9 324.5,525.1 324.1,525.3 323.6,525.5 323.2,525.5 322.7,525.6 322.3,525.6 321.8,525.5 321.4,525.5 320.9,525.3 320.5,525.1 320.1,524.9 319.7,524.7 319.4,524.4 319.0,524.0 316.3,526.4 252.8,454.3 208.7,469.0 311.4,596.0 356.8,584.7 381.6,414.2 341.4,423.7 329.0,521.8 327.1,521.6Z"/>
<path fill="#1c1152" d="M407.7,404.7 406.2,405.3 404.8,406.2 403.7,407.5 403.0,409.0 402.7,410.6 402.8,412.3 408.3,440.3 408.9,442.0 409.9,443.5 411.4,444.6 413.1,445.3 414.9,445.5 416.7,445.2 440.0,437.5 456.2,525.0 434.7,528.6 433.0,529.1 431.4,530.1 430.3,531.5 429.5,533.2 429.3,535.0 429.5,536.8 439.5,571.2 440.1,572.7 441.2,574.0 442.5,575.0 444.0,575.6 445.7,575.9 447.3,575.7 543.7,551.5 545.2,550.9 546.5,550.0 547.5,548.8 548.2,547.3 548.6,545.8 548.6,544.2 544.0,513.6 543.5,511.9 542.5,510.4 541.1,509.1 539.4,508.4 537.6,508.1 535.8,508.3 516.2,513.8 503.8,423.8 525.9,418.8 527.5,418.2 528.8,417.3 529.9,416.1 530.6,414.6 531.0,413.0 530.9,411.4 526.5,384.4 526.0,382.7 525.0,381.2 523.7,380.0 522.1,379.3 520.4,378.9 518.6,379.1Z"/>
<path fill="#fff9cc" d="M409.0,409.1 408.3,409.4 407.9,409.7 407.6,410.0 407.4,410.4 407.3,410.9 407.4,411.7 412.7,439.1 413.0,439.9 413.3,440.3 413.7,440.6 414.2,440.8 414.7,440.9 415.5,440.7 438.6,433.1 439.0,433.0 439.5,432.9 439.9,432.9 440.4,432.9 440.8,433.0 441.3,433.1 441.7,433.2 442.1,433.4 442.5,433.7 442.9,433.9 443.3,434.2 443.6,434.6 443.8,435.0 444.1,435.4 444.3,435.8 444.4,436.2 444.5,436.7 460.8,524.2 460.8,524.6 460.8,525.1 460.8,525.5 460.7,526.0 460.6,526.4 460.5,526.8 460.3,527.3 460.0,527.6 459.7,528.0 459.4,528.3 459.1,528.6 458.7,528.9 458.3,529.1 457.9,529.3 457.5,529.4 457.0,529.5 435.8,533.1 435.0,533.3 434.5,533.6 434.2,534.0 434.0,534.5 433.9,535.0 434.0,535.8 443.8,569.6 444.1,570.3 444.4,570.7 444.8,571.0 445.2,571.2 445.7,571.2 446.5,571.1 542.3,547.1 543.0,546.8 543.4,546.5 543.7,546.2 543.9,545.8 544.0,545.3 544.0,544.6 539.5,514.6 539.2,513.8 539.0,513.4 538.6,513.0 538.1,512.8 537.6,512.7 536.7,512.9 517.5,518.2 517.0,518.3 516.6,518.3 516.1,518.3 515.7,518.3 515.2,518.2 514.8,518.1 514.3,517.9 513.9,517.7 513.5,517.5 513.2,517.2 512.8,516.8 512.6,516.5 512.3,516.1 512.1,515.7 511.9,515.3 511.8,514.8 511.7,514.4 499.2,424.4 499.2,423.9 499.2,423.5 499.2,423.0 499.3,422.6 499.4,422.1 499.6,421.7 499.8,421.3 500.1,420.9 500.4,420.6 500.7,420.3 501.1,420.0 501.5,419.8 501.9,419.5 502.3,419.4 502.7,419.3 524.6,414.4 525.3,414.1 525.7,413.8 526.0,413.5 526.2,413.1 526.3,412.6 526.3,411.8 522.0,385.4 521.8,384.7 521.5,384.2 521.1,383.9 520.7,383.7 520.2,383.6 519.4,383.7Z"/>
<path fill="#e86300" d="M514.1,406.8 500.6,409.8 501.9,415.6 515.1,412.7 515.2,413.1 522.0,411.6 522.0,411.1 522.8,411.0 521.9,405.0 521.0,405.2 518.1,387.3 511.2,388.9ZM437.4,429.6 435.5,423.9 414.5,430.8 415.6,436.8ZM507.5,515.0 495.0,425.0 488.1,425.9 500.6,515.9ZM444.9,561.5 446.6,567.3 532.8,545.6 532.9,546.0 539.7,544.3 539.6,543.9 540.5,543.7 539.6,537.7 538.7,537.9 535.5,516.6 528.7,518.5 531.9,539.7Z"/>
<path fill="url(#fg)" d="M439.0,433.0 439.5,432.9 439.9,432.9 440.4,432.9 440.8,433.0 441.3,433.1 441.7,433.2 442.1,433.4 442.5,433.7 442.9,433.9 443.3,434.2 443.6,434.6 443.8,435.0 444.1,435.4 444.3,435.8 444.4,436.2 444.5,436.7 448.1,436.0 464.3,523.5 460.8,524.2 460.8,524.6 460.8,525.1 460.8,525.5 460.7,526.0 460.6,526.4 460.5,526.8 460.3,527.3 460.0,527.6 459.7,528.0 459.4,528.3 459.1,528.6 458.7,528.9 458.3,529.1 457.9,529.3 457.5,529.4 457.0,529.5 457.0,529.7 437.5,533.0 445.7,561.3 531.9,539.7 528.3,515.4 517.5,518.4 517.5,518.2 517.0,518.3 516.6,518.3 516.1,518.3 515.7,518.3 515.2,518.2 514.8,518.1 514.3,517.9 513.9,517.7 513.5,517.5 513.2,517.2 512.8,516.8 512.6,516.5 512.3,516.1 512.1,515.7 511.9,515.3 511.8,514.8 511.7,514.4 500.6,515.9 488.1,425.9 499.2,424.4 499.2,424.4 499.2,423.9 499.2,423.5 499.2,423.0 499.3,422.6 499.4,422.1 499.6,421.7 499.8,421.3 500.1,420.9 500.4,420.6 500.7,420.3 501.1,420.0 501.5,419.8 501.9,419.5 502.3,419.4 502.7,419.3 500.6,409.8 514.1,406.8 510.7,385.8 410.5,409.0 414.8,430.7 435.5,423.9 438.6,433.1Z"/>
<path fill="#1c1152" d="M535.4,378.7 533.8,379.2 532.4,380.1 531.3,381.3 530.5,382.8 530.1,384.4 530.1,386.1 554.9,548.2 555.4,549.9 556.3,551.3 557.5,552.5 559.0,553.3 560.7,553.7 562.4,553.6 611.8,545.2 613.5,544.7 615.0,543.8 616.2,542.5 616.9,540.9 617.3,539.2 617.1,537.4 597.5,448.8 668.4,535.5 669.7,536.7 671.3,537.5 673.0,537.9 674.8,537.7 722.4,527.4 724.2,526.7 725.6,525.7 726.7,524.2 727.4,522.5 727.6,520.7 719.2,362.6 718.9,360.9 718.1,359.3 717.0,358.0 715.5,357.1 713.9,356.5 712.1,356.5 658.2,361.5 656.6,361.9 655.1,362.6 653.9,363.8 653.0,365.2 652.4,366.8 652.4,368.5 657.5,428.8 603.9,369.8 602.7,368.7 601.2,368.0 599.6,367.7 598.0,367.7Z"/>
<path fill="#fff9cc" d="M536.5,383.2 535.8,383.4 535.4,383.7 535.1,384.0 534.8,384.4 534.7,384.9 534.7,385.7 559.4,547.2 559.6,548.0 559.9,548.4 560.2,548.7 560.7,549.0 561.1,549.1 561.9,549.1 610.8,540.8 611.5,540.5 612.0,540.2 612.3,539.9 612.5,539.4 612.6,538.9 612.5,538.1 593.0,449.7 592.9,449.3 592.9,448.8 592.9,448.4 593.0,447.9 593.1,447.5 593.2,447.1 593.4,446.6 593.6,446.2 593.9,445.9 594.2,445.5 594.5,445.2 594.9,445.0 595.3,444.7 595.7,444.5 596.1,444.4 596.6,444.2 597.0,444.2 597.5,444.2 597.9,444.2 598.4,444.2 598.8,444.3 599.3,444.5 599.7,444.7 600.1,444.9 600.4,445.2 600.8,445.5 601.1,445.8 671.7,532.3 672.3,532.9 672.8,533.1 673.3,533.2 674.1,533.2 721.2,523.0 722.0,522.7 722.4,522.4 722.7,521.9 722.9,521.5 723.0,520.6 714.6,363.1 714.5,362.3 714.3,361.9 713.9,361.5 713.5,361.3 713.1,361.1 712.2,361.1 659.0,366.0 658.2,366.2 657.8,366.4 657.4,366.8 657.2,367.2 657.0,367.6 657.0,368.4 662.1,428.4 662.1,428.8 662.1,429.3 662.0,429.7 661.9,430.2 661.7,430.6 661.5,431.0 661.3,431.4 661.0,431.8 660.7,432.1 660.3,432.4 659.9,432.6 659.5,432.9 659.1,433.1 658.7,433.2 658.2,433.3 657.8,433.3 657.3,433.3 656.9,433.3 656.4,433.2 656.0,433.1 655.6,432.9 655.2,432.7 654.8,432.5 654.4,432.2 654.1,431.8 600.7,373.1 600.2,372.6 599.7,372.4 599.3,372.3 598.5,372.3Z"/>
<path fill="#e86300" d="M651.7,434.1 598.6,375.6 598.3,375.7 651.4,434.2ZM669.4,524.2 673.7,529.5 711.8,521.2 711.8,521.6 718.8,520.1 718.7,519.7 719.6,519.5 719.3,513.4 718.4,513.6 710.6,364.5 703.6,365.2 711.5,515.1ZM600.6,532.7 561.5,539.3 562.4,545.2 601.9,538.5 602.0,538.9 608.3,537.8 608.2,537.4 609.0,537.3 607.7,531.4 606.9,531.6 589.0,450.6 582.8,452.0Z"/>
<path fill="url(#fg)" d="M592.9,449.3 592.9,448.8 592.9,448.4 593.0,447.9 593.1,447.5 593.2,447.1 593.4,446.6 593.6,446.2 593.9,445.9 594.2,445.5 594.5,445.2 594.9,445.0 595.3,444.7 595.7,444.5 596.1,444.4 596.6,444.2 597.0,444.2 597.5,444.2 597.9,444.2 598.4,444.2 598.8,444.3 599.3,444.5 599.7,444.7 600.1,444.9 600.4,445.2 600.8,445.5 601.1,445.8 606.0,441.8 672.8,523.5 711.5,515.1 703.4,362.1 660.0,366.2 665.2,428.1 662.1,428.4 662.1,428.8 662.1,429.3 662.0,429.7 661.9,430.2 661.7,430.6 661.5,431.0 661.3,431.4 661.0,431.8 660.7,432.1 660.3,432.4 659.9,432.6 659.5,432.9 659.1,433.1 658.7,433.2 658.2,433.3 657.8,433.3 657.3,433.3 656.9,433.3 656.4,433.2 656.0,433.1 655.6,432.9 655.2,432.7 654.8,432.5 654.4,432.2 654.1,431.8 651.4,434.2 595.8,373.0 537.8,383.1 561.7,539.3 600.6,532.7 582.8,452.0 593.0,449.7Z"/>
<path fill="#1c1152" d="M725.7,356.0 724.1,356.3 722.5,357.0 721.2,358.1 720.3,359.5 719.7,361.1 719.5,362.7 721.0,400.3 721.3,402.0 722.0,403.5 723.2,404.9 724.6,405.8 726.2,406.4 728.0,406.5 778.5,403.0 778.1,525.3 778.3,527.0 779.0,528.6 780.1,530.0 781.5,531.0 783.1,531.6 784.8,531.8 841.5,530.0 843.1,529.7 844.6,529.0 845.9,528.0 846.9,526.6 847.6,525.1 847.7,523.4 846.0,400.8 895.4,400.8 897.0,400.6 898.6,399.9 899.9,398.9 901.0,397.5 901.6,396.0 901.9,394.3 902.0,354.7 901.8,353.0 901.1,351.4 900.0,350.0 898.6,349.0 896.9,348.4 895.2,348.2Z"/>
<path fill="#fff9cc" d="M726.2,360.6 725.5,360.7 725.0,360.9 724.7,361.2 724.4,361.6 724.2,362.1 724.1,362.9 725.6,399.8 725.7,400.6 725.9,401.0 726.3,401.4 726.7,401.7 727.1,401.8 727.9,401.9 778.2,398.4 778.6,398.4 779.1,398.4 779.5,398.5 779.9,398.6 780.4,398.8 780.7,399.0 781.1,399.2 781.5,399.5 781.8,399.8 782.1,400.1 782.4,400.5 782.6,400.9 782.8,401.3 782.9,401.7 783.0,402.1 783.1,402.6 783.1,403.0 782.7,525.0 782.8,525.8 783.0,526.2 783.3,526.6 783.7,526.9 784.2,527.1 785.0,527.2 841.0,525.4 841.8,525.3 842.2,525.1 842.6,524.8 842.9,524.4 843.1,523.9 843.1,523.2 841.4,400.9 841.4,400.4 841.5,400.0 841.6,399.5 841.7,399.1 841.9,398.7 842.2,398.3 842.4,397.9 842.7,397.6 843.1,397.3 843.4,397.0 843.8,396.8 844.2,396.6 844.7,396.4 845.1,396.3 845.5,396.2 846.0,396.2 895.1,396.2 895.8,396.1 896.3,395.9 896.7,395.6 897.0,395.2 897.1,394.8 897.3,394.0 897.4,355.0 897.3,354.2 897.1,353.8 896.8,353.4 896.4,353.1 895.9,352.9 895.1,352.8Z"/>
<path fill="#e86300" d="M886.1,386.5 846.0,386.5 846.0,392.5 886.1,392.5 886.1,392.9 893.1,392.9 893.1,392.5 894.0,392.5 894.0,386.5 893.1,386.5 893.2,356.2 886.2,356.5ZM777.9,394.7 777.5,388.7 728.6,392.1 728.8,398.1ZM786.0,517.4 786.0,523.4 832.0,522.0 832.0,522.4 839.0,522.2 839.0,521.8 839.8,521.7 839.7,515.7 838.9,515.8 837.3,400.9 830.3,401.0 831.9,516.0Z"/>
<path fill="url(#fg)" d="M778.6,398.4 779.1,398.4 779.5,398.5 779.9,398.6 780.4,398.8 780.7,399.0 781.1,399.2 781.5,399.5 781.8,399.8 782.1,400.1 782.4,400.5 782.6,400.9 782.8,401.3 782.9,401.7 783.0,402.1 783.1,402.6 783.1,403.0 785.9,403.0 785.5,517.5 831.9,516.0 830.3,401.0 841.4,400.9 841.4,400.4 841.5,400.0 841.6,399.5 841.7,399.1 841.9,398.7 842.2,398.3 842.4,397.9 842.7,397.6 843.1,397.3 843.4,397.0 843.8,396.8 844.2,396.6 844.7,396.4 845.1,396.3 845.5,396.2 846.0,396.2 846.0,396.2 846.0,386.5 886.1,386.5 886.3,353.4 727.0,360.7 728.3,392.1 777.5,388.7 778.2,398.4Z"/>
</svg>
<!--/ART-->
  </div>
</div>
<div class="a" id="vscroll"></div>
<div class="a" id="status"></div>
<div class="a" id="statusgap"></div>
<div class="a" id="timeline"></div>
<!--STATUS-->
<!-- vertical scrollbar arrows -->
<svg style="left:1579px;top:97px" width="9" height="6" viewBox="0 0 9 6"><path d="M1 5l3.500-3.500L8 5" stroke="#7e7e7e" stroke-width="1.300" fill="none"/></svg>
<svg style="left:1579px;top:970px" width="9" height="6" viewBox="0 0 9 6"><path d="M1 1l3.500 3.500L8 1" stroke="#7e7e7e" stroke-width="1.300" fill="none"/></svg>
<!-- status bar -->
<div class="a" style="left:41px;top:983px;width:48px;height:16px;background:#484848"></div>
<span class="t" style="left:44px;top:985px;font-size:11.500px;color:#e6e6e6;--w:39;transform:scaleX(1.000)">34.97%</span>
<div class="a" style="left:89px;top:983px;width:184px;height:16px;background:#535353"></div>
<span class="t" style="left:116px;top:985px;font-size:11.500px;color:#e0e0e0;--w:115;transform:scaleX(0.877)">ファイル : 22.9M/638.4M</span>
<svg style="left:261px;top:986px" width="6" height="11" viewBox="0 0 6 11"><path d="M1 1l3.500 4.500L1 10" stroke="#cfcfcf" stroke-width="1.200" fill="none"/></svg>
<svg style="left:280px;top:987px" width="6" height="9" viewBox="0 0 6 9"><path d="M5 1L1.500 4.500 5 8" stroke="#7e7e7e" stroke-width="1.200" fill="none"/></svg>
<div class="a" style="left:694px;top:985px;width:456px;height:13px;background:#606060"></div>
<svg style="left:1562px;top:987px" width="6" height="9" viewBox="0 0 6 9"><path d="M1 1l3.500 3.500L1 8" stroke="#8a8a8a" stroke-width="1.200" fill="none"/></svg>
<div class="a" style="left:1575px;top:983px;width:17px;height:16px;background:#4a4a4a"></div>
<!-- timeline -->
<div class="a" style="left:41px;top:1002px;width:65px;height:28px;background:#535353"></div>
<span class="t" style="left:49px;top:1009px;font-size:12px;color:#e2e2e2;--w:49;transform:scaleX(0.681)">タイムライン</span>
<svg style="left:1575px;top:1011px" width="11" height="9" viewBox="0 0 11 9"><path d="M0 1h11M0 3.300h11M0 5.600h11M0 7.900h11" stroke="#c8c8c8" stroke-width="1"/></svg>

<!--/STATUS-->

<!-- ================= RIGHT SIDE ================= -->
<div class="a" id="rgap1"></div>
<div class="a" id="iconstrip"></div>
<div class="a" id="rgap2"></div>
<div class="a" id="rpanel"></div>
<!--RIGHT-->
<!-- header strip -->
<div class="a" style="left:1594px;top:61px;width:326px;height:11px;background:#424242"></div>
<svg style="left:1617px;top:63px" width="9" height="7" viewBox="0 0 9 7"><path d="M3.500 1L1 3.500 3.500 6M7.500 1L5 3.500 7.500 6" stroke="#d8d8d8" stroke-width="1.200" fill="none"/></svg>
<svg style="left:1904px;top:63px" width="9" height="7" viewBox="0 0 9 7"><path d="M1 1l2.500 2.500L1 6M5 1l2.500 2.500L5 6" stroke="#d8d8d8" stroke-width="1.200" fill="none"/></svg>
<div class="a" style="left:1594px;top:72px;width:326px;height:1px;background:#3a3a3a"></div>
<!-- icon strip groups -->
<div class="a" style="left:1594px;top:113px;width:37px;height:2px;background:#3c3c3c"></div>
<div class="a" style="left:1594px;top:182px;width:37px;height:2px;background:#3c3c3c"></div>
<div class="a" style="left:1594px;top:223px;width:37px;height:2px;background:#3c3c3c"></div>
<div class="a" style="left:1604px;top:77px;width:19px;height:4px;background:repeating-linear-gradient(90deg,#3d3d3d 0 1px,transparent 1px 2px)"></div>
<div class="a" style="left:1604px;top:118px;width:19px;height:4px;background:repeating-linear-gradient(90deg,#3d3d3d 0 1px,transparent 1px 2px)"></div>
<div class="a" style="left:1604px;top:187px;width:19px;height:4px;background:repeating-linear-gradient(90deg,#3d3d3d 0 1px,transparent 1px 2px)"></div>
<div class="a" style="left:1604px;top:228px;width:19px;height:4px;background:repeating-linear-gradient(90deg,#3d3d3d 0 1px,transparent 1px 2px)"></div>
<!-- history icon -->
<svg style="left:1604px;top:86px" width="18" height="18" viewBox="0 0 18 18"><rect x="1" y="1" width="4" height="4" fill="none" stroke="#d6d6d6" stroke-width="1.100"/><rect x="1" y="7" width="4" height="4" fill="none" stroke="#d6d6d6" stroke-width="1.100"/><rect x=".5" y="12.500" width="5" height="5" fill="#d6d6d6"/><path d="M9 15c5 0 7-4 6-8.500S11.500 2.500 9.500 5.500" fill="none" stroke="#d6d6d6" stroke-width="1.600"/><path d="M8 2l1 5 4.500-2.500z" fill="#d6d6d6"/></svg>
<!-- brush settings icon -->
<svg style="left:1602px;top:127px" width="22" height="19" viewBox="0 0 22 19"><path d="M0 1h2M3 1h4M0 4h2M3 4h4M0 7h2M3 7h4" stroke="#d6d6d6" stroke-width="1.300"/><path d="M20.500 2.500c-3.500 1.500-7 5-9 8.500l1.800 1.500c3-3 6-7 7.200-10z" fill="#d6d6d6"/><path d="M10.700 11.700c-1.800.1-2.700 1.200-2.900 2.700-.2.900-.8 1.500-1.800 1.800 2.200.8 5 .3 6-1.600.5-1.200 0-2.300-1.300-2.900z" fill="#d6d6d6"/></svg>
<!-- brushes icon -->
<svg style="left:1602px;top:156px" width="22" height="17" viewBox="0 0 22 17"><path d="M1 3.500c2-2.500 5-2.500 7 0-2 2.500-5 2.500-7 0z" fill="#d6d6d6"/><path d="M8 3.500h12" stroke="#d6d6d6" stroke-width="1.500"/><path d="M3 11.500h10" stroke="#d6d6d6" stroke-width="1.800"/><path d="M13 11.500l7-4.500v9z" fill="#d6d6d6"/></svg>
<!-- clone source icon -->
<svg style="left:1602px;top:195px" width="22" height="20" viewBox="0 0 22 20"><path d="M0 2h2M3 2h4M0 5h2M3 5h4M0 8h2M3 8h4" stroke="#d6d6d6" stroke-width="1.300"/><path d="M14 2a3 3 0 0 1 3 3c0 1.400-1.200 2.300-1.200 3.700v1.100H20V13H8V9.800h4.200V8.700C12.200 7.300 11 6.400 11 5a3 3 0 0 1 3-3z" fill="#d6d6d6"/><path d="M8.500 15.500h11M9.500 17.700h9" stroke="#d6d6d6" stroke-width="1.300"/></svg>
<!-- character icon (partly hidden) -->
<span class="t" style="left:1603px;top:236px;font-size:15px;color:#d6d6d6">A</span>
<div class="a" style="left:1617px;top:237px;width:1.500px;height:12px;background:#d6d6d6"></div>

<!-- ============ PROPERTIES PANEL ============ -->
<div class="a" style="left:1634px;top:73px;width:286px;height:25px;background:#424242"></div>
<div class="a" style="left:1634px;top:73px;width:57px;height:25px;background:#535353"></div>
<span class="t" style="left:1643px;top:80px;font-size:12px;color:#e2e2e2;--w:40;transform:scaleX(0.667)">プロパティ</span>
<svg style="left:1903px;top:82px" width="11" height="9" viewBox="0 0 11 9"><path d="M0 1h11M0 3.300h11M0 5.600h11M0 7.900h11" stroke="#c8c8c8" stroke-width="1"/></svg>
<div class="a" style="left:1645px;top:107px;width:22px;height:22px;background:#383838;border:1px solid #5c5c5c;border-radius:3px"></div>
<span class="t" style="left:1650px;top:110px;font-family:'Liberation Serif',serif;font-weight:bold;font-size:16px;color:#f0f0f0;--w:12;transform:scaleX(1.124)">T</span>
<span class="t" style="left:1674px;top:112px;font-size:12px;color:#8e8e8e;--w:73;transform:scaleX(0.760)">テキストレイヤー</span>
<div class="a" style="left:1634px;top:134px;width:286px;height:1px;background:#474747"></div>
<svg style="left:1642px;top:144px" width="6" height="11" viewBox="0 0 6 11"><path d="M1 1l3.500 4.500L1 10" stroke="#bdbdbd" stroke-width="1.200" fill="none"/></svg>
<span class="t" style="left:1657px;top:143px;font-size:12px;font-weight:bold;color:#f2f2f2;--w:24;transform:scaleX(1.000)">変形</span>
<svg style="left:1865px;top:142px" width="14" height="14" viewBox="0 0 14 14"><path d="M3.500 5.500a4.300 4.300 0 1 1 3.500 6.800" fill="none" stroke="#e0e0e0" stroke-width="1.300"/><path d="M.5 5l3.500 2.500L5 3z" fill="#e0e0e0"/><path d="M0 13h12" stroke="#e0e0e0" stroke-width="1.200"/></svg>
<div class="a" style="left:1634px;top:166px;width:270px;height:1px;background:#474747"></div>
<svg style="left:1640px;top:177px" width="11" height="7" viewBox="0 0 11 7"><path d="M1 1l4.500 4.500L10 1" stroke="#bdbdbd" stroke-width="1.200" fill="none"/></svg>
<span class="t" style="left:1657px;top:175px;font-size:12px;font-weight:bold;color:#f2f2f2;--w:24;transform:scaleX(1.000)">文字</span>
<div class="a" style="left:1642px;top:198px;width:194px;height:19px;background:#454545;border:1px solid #686868;border-radius:3px"></div>
<div class="a" style="left:1820px;top:199px;width:1px;height:17px;background:#686868"></div>
<span class="t" style="left:1646px;top:202px;font-size:11.500px;color:#f0f0f0;--w:39;transform:scaleX(0.910)">Verdana</span>
<svg style="left:1824px;top:205px" width="9" height="6" viewBox="0 0 9 6"><path d="M1 1l3.500 3.500L8 1" stroke="#d0d0d0" stroke-width="1.200" fill="none"/></svg>
<div class="a" style="left:1642px;top:223px;width:237px;height:19px;background:#454545;border:1px solid #686868;border-radius:3px"></div>
<div class="a" style="left:1863px;top:224px;width:1px;height:17px;background:#686868"></div>
<span class="t" style="left:1646px;top:227px;font-size:11.500px;color:#f0f0f0;--w:20;transform:scaleX(0.868)">Bold</span>
<svg style="left:1867px;top:230px" width="9" height="6" viewBox="0 0 9 6"><path d="M1 1l3.500 3.500L8 1" stroke="#d0d0d0" stroke-width="1.200" fill="none"/></svg>
<!-- properties scrollbar -->
<div class="a" style="left:1904px;top:135px;width:16px;height:391px;background:#4a4a4a"></div>
<svg style="left:1907px;top:144px" width="9" height="6" viewBox="0 0 9 6"><path d="M1 5l3.500-3.500L8 5" stroke="#8a8a8a" stroke-width="1.200" fill="none"/></svg>
<div class="a" style="left:1905px;top:153px;width:12px;height:160px;background:#6a6a6a"></div>
<svg style="left:1907px;top:513px" width="9" height="6" viewBox="0 0 9 6"><path d="M1 1l3.500 3.500L8 1" stroke="#8a8a8a" stroke-width="1.200" fill="none"/></svg>
<div class="a" style="left:1634px;top:450px;width:270px;height:1px;background:#474747"></div>
<svg style="left:1640px;top:461px" width="11" height="7" viewBox="0 0 11 7"><path d="M1 1l4.500 4.500L10 1" stroke="#bdbdbd" stroke-width="1.200" fill="none"/></svg>
<span class="t" style="left:1657px;top:459px;font-size:12px;font-weight:bold;color:#f2f2f2;--w:99;transform:scaleX(0.825)">文字ツールオプション</span>
<div class="a" style="left:1643px;top:483px;width:22px;height:22px;background:#363636;border:1px solid #5a5a5a;border-radius:3px"></div>

<span class="t" style="left:1645px;top:486px;font-family:'Liberation Serif',serif;font-weight:bold;font-size:15px;color:#e6e6e6;--w:18;transform:scaleX(0.899)">TT</span>
<span class="t" style="left:1670px;top:486px;font-family:'Liberation Serif',serif;font-weight:bold;font-size:15px;color:#d2d2d2;--w:10;transform:scaleX(0.998)">T</span>
<span class="t" style="left:1680px;top:491px;font-family:'Liberation Serif',serif;font-weight:bold;font-size:10px;color:#d2d2d2;--w:6;transform:scaleX(0.899)">T</span>
<span class="t" style="left:1695px;top:486px;font-family:'Liberation Serif',serif;font-weight:bold;font-size:15px;color:#d2d2d2;--w:10;transform:scaleX(0.998)">T</span>
<span class="t" style="left:1706px;top:485px;font-family:'Liberation Serif',serif;font-weight:bold;font-size:7px;color:#d2d2d2">1</span>
<span class="t" style="left:1720px;top:486px;font-family:'Liberation Serif',serif;font-weight:bold;font-size:15px;color:#d2d2d2;--w:10;transform:scaleX(0.998)">T</span>
<span class="t" style="left:1730px;top:494px;font-family:'Liberation Serif',serif;font-weight:bold;font-size:7px;color:#d2d2d2">1</span>
<span class="t" style="left:1745px;top:485px;font-family:'Liberation Serif',serif;font-weight:bold;font-size:15px;color:#d2d2d2;--w:10;transform:scaleX(0.998)">T</span>
<div class="a" style="left:1744px;top:500px;width:12px;height:1px;background:#d2d2d2"></div>
<span class="t" style="left:1769px;top:486px;font-family:'Liberation Serif',serif;font-weight:bold;font-size:15px;color:#d2d2d2;--w:10;transform:scaleX(0.998)">T</span>
<div class="a" style="left:1768px;top:494px;width:12px;height:1px;background:#d2d2d2"></div>
<span class="t" style="left:1792px;top:484px;font-family:'Liberation Serif',serif;font-size:18px;color:#d2d2d2;--w:7;transform:scaleX(0.778)">1</span>
<span class="t" style="left:1799px;top:485px;font-family:'Liberation Serif',serif;font-size:10px;color:#d2d2d2;--w:8;transform:scaleX(1.199)">st</span>
<span class="t" style="left:1816px;top:484px;font-family:'Liberation Serif',serif;font-size:18px;color:#d2d2d2;--w:12;transform:scaleX(0.889)">½</span>
<!-- cut-off second row of glyph buttons -->
<div class="a" style="left:1640px;top:517px;width:190px;height:9px;overflow:hidden">
 <span class="t" style="left:10px;top:1px;font-family:'Liberation Serif',serif;font-style:italic;font-size:15px;color:#9a9a9a">fi</span>
 <span class="t" style="left:36px;top:0px;font-family:'Liberation Serif',serif;font-style:italic;font-size:15px;color:#8a8a8a">o</span>
 <span class="t" style="left:57px;top:1px;font-family:'Liberation Serif',serif;font-weight:bold;font-size:15px;color:#dcdcdc">st</span>
 <span class="t" style="left:84px;top:0px;font-family:'Liberation Serif',serif;font-style:italic;font-size:15px;color:#8a8a8a">A</span>
 <span class="t" style="left:107px;top:-3px;font-family:'Liberation Serif',serif;font-size:17px;color:#dcdcdc">ā</span>
 <span class="t" style="left:135px;top:1px;font-family:'Liberation Serif',serif;font-style:italic;font-size:15px;color:#8a8a8a">T</span>
 <div class="a" style="left:158px;top:1px;width:15px;height:12px;border:1.500px solid #dcdcdc;border-radius:2px 2px 0 0"></div>
</div>

<!-- ============ LAYERS PANEL ============ -->
<div class="a" style="left:1634px;top:551px;width:286px;height:3px;background:#3c3c3c"></div>
<div class="a" style="left:1634px;top:554px;width:286px;height:28px;background:#424242"></div>
<div class="a" style="left:1665px;top:554px;width:1px;height:28px;background:#383838"></div>
<div class="a" style="left:1666px;top:554px;width:49px;height:28px;background:#535353"></div>
<div class="a" style="left:1774px;top:554px;width:1px;height:28px;background:#383838"></div>
<span class="t" style="left:1643px;top:561px;font-size:12px;color:#a8a8a8;--w:14;transform:scaleX(0.912)">3D</span>
<span class="t" style="left:1675px;top:561px;font-size:12px;font-weight:bold;color:#f0f0f0;--w:32;transform:scaleX(0.667)">レイヤー</span>
<span class="t" style="left:1724px;top:561px;font-size:12px;color:#bdbdbd;--w:42;transform:scaleX(0.700)">チャンネル</span>
<svg style="left:1903px;top:563px" width="11" height="9" viewBox="0 0 11 9"><path d="M0 1h11M0 3.300h11M0 5.600h11M0 7.900h11" stroke="#c8c8c8" stroke-width="1"/></svg>
<!-- filter row -->
<div class="a" style="left:1638px;top:590px;width:118px;height:22px;background:#4d4d4d;border:1px solid #5f5f5f;border-radius:3px"></div>
<svg style="left:1645px;top:596px" width="11" height="11" viewBox="0 0 11 11"><circle cx="4.300" cy="4.300" r="3.200" fill="none" stroke="#c8c8c8" stroke-width="1.500"/><path d="M6.800 6.800l3.500 3.500" stroke="#c8c8c8" stroke-width="1.900"/></svg>
<span class="t" style="left:1661px;top:595px;font-size:12px;color:#8e8e8e;--w:22;transform:scaleX(0.917)">種類</span>
<svg style="left:1745px;top:599px" width="9" height="6" viewBox="0 0 9 6"><path d="M1 1l3.500 3.500L8 1" stroke="#6a6a6a" stroke-width="1.200" fill="none"/></svg>
<svg style="left:1777px;top:594px" width="13" height="11" viewBox="0 0 13 11"><rect x=".6" y=".6" width="11.800" height="9.800" fill="none" stroke="#c4c4c4" stroke-width="1.200"/><path d="M2.500 8.500l2.500-3.500 2 2.500 1.500-1.500 2 2.500z" fill="#c4c4c4"/></svg>
<svg style="left:1802px;top:595px" width="11" height="11" viewBox="0 0 11 11"><circle cx="5.500" cy="5.500" r="4.700" fill="none" stroke="#c4c4c4" stroke-width="1.200"/><path d="M8.800 2.200A4.700 4.700 0 0 1 2.200 8.800z" fill="#c4c4c4"/></svg>
<span class="t" style="left:1826px;top:593px;font-family:'Liberation Serif',serif;font-weight:bold;font-size:15px;color:#c4c4c4;--w:11;transform:scaleX(1.098)">T</span>
<svg style="left:1849px;top:594px" width="13" height="13" viewBox="0 0 13 13"><rect x="2" y="2" width="9" height="9" fill="none" stroke="#c4c4c4" stroke-width="1.200"/><rect x="0" y="0" width="3.500" height="3.500" fill="#c4c4c4"/><rect x="9.500" y="0" width="3.500" height="3.500" fill="#c4c4c4"/><rect x="0" y="9.500" width="3.500" height="3.500" fill="#c4c4c4"/><rect x="9.500" y="9.500" width="3.500" height="3.500" fill="#c4c4c4"/></svg>
<svg style="left:1874px;top:593px" width="12" height="14" viewBox="0 0 12 14"><path d="M3.500.6h5l3 3v9.800h-8z" fill="none" stroke="#c4c4c4" stroke-width="1.200"/><rect x="0" y="7" width="6" height="6.500" fill="#c4c4c4"/></svg>
<div class="a" style="left:1905px;top:594px;width:11px;height:19px;border-radius:6px;background:#4a4a4a;border:1px solid #5c5c5c"></div>
<div class="a" style="left:1906px;top:592px;width:9px;height:9px;border-radius:5px;background:#9e9e9e"></div>
<div class="a" style="left:1634px;top:614px;width:286px;height:1px;background:#474747"></div>
<!-- blend row -->
<div class="a" style="left:1638px;top:619px;width:153px;height:22px;background:#4d4d4d;border:1px solid #5f5f5f;border-radius:3px"></div>
<span class="t" style="left:1647px;top:624px;font-size:12px;color:#8e8e8e;--w:22;transform:scaleX(0.917)">通常</span>
<svg style="left:1781px;top:628px" width="9" height="6" viewBox="0 0 9 6"><path d="M1 1l3.500 3.500L8 1" stroke="#6a6a6a" stroke-width="1.200" fill="none"/></svg>
<span class="t" style="left:1801px;top:624px;font-size:12px;color:#8e8e8e;--w:54;transform:scaleX(0.988)">不透明度 :</span>
<div class="a" style="left:1860px;top:620px;width:56px;height:21px;background:#4d4d4d;border:1px solid #5f5f5f;border-radius:3px"></div>
<div class="a" style="left:1862px;top:622px;width:34px;height:17px;background:#474747"></div>
<div class="a" style="left:1899px;top:621px;width:1px;height:19px;background:#5f5f5f"></div>
<span class="t" style="left:1864px;top:625px;font-size:12px;color:#7e7e7e;--w:22;transform:scaleX(0.915)">90%</span>
<svg style="left:1903px;top:628px" width="9" height="6" viewBox="0 0 9 6"><path d="M1 1l3.500 3.500L8 1" stroke="#6a6a6a" stroke-width="1.200" fill="none"/></svg>
<div class="a" style="left:1634px;top:643px;width:286px;height:1px;background:#474747"></div>
<!-- lock row -->
<span class="t" style="left:1642px;top:652px;font-size:12px;color:#8e8e8e;--w:30;transform:scaleX(0.703)">ロック :</span>
<svg style="left:1681px;top:652px" width="12" height="12" viewBox="0 0 12 12"><rect x=".5" y=".5" width="11" height="11" fill="none" stroke="#9a9a9a" stroke-width="1"/><path d="M1 1h3.300v3.300H1zM7.600 1H11v3.300H7.600zM4.300 4.300h3.300v3.300H4.300zM1 7.600h3.300V11H1zM7.600 7.600H11V11H7.600z" fill="#9a9a9a"/></svg>
<svg style="left:1702px;top:651px" width="14" height="14" viewBox="0 0 14 14"><path d="M13 1C10 2.500 7.500 5.500 6 8.500l1.500 1.200C10 7 12 3.500 13 1z" fill="#9a9a9a"/><path d="M5.300 9.200c-1.500.1-2.300 1.100-2.500 2.400-.1.700-.7 1.200-1.500 1.500 1.900.6 4.200.2 5-1.400.5-1 0-2-1-2.500z" fill="#9a9a9a"/></svg>
<svg style="left:1724px;top:651px" width="14" height="14" viewBox="0 0 14 14"><path d="M7 .5l2.300 2.600H7.700v3.200h3.200V4.700L13.500 7l-2.600 2.300V7.700H7.700v3.200h1.600L7 13.500l-2.300-2.600h1.600V7.700H3.100v1.600L.5 7l2.600-2.300v1.600h3.200V3.100H4.700z" fill="#9a9a9a"/></svg>
<svg style="left:1745px;top:651px" width="15" height="15" viewBox="0 0 15 15"><path d="M3.500 0v11.500H15M0 3.500h11.500V15" fill="none" stroke="#9a9a9a" stroke-width="1.300"/><path d="M9 1.500l3-1.500 1.500 3z" fill="#9a9a9a"/></svg>
<svg style="left:1769px;top:650px" width="12" height="14" viewBox="0 0 12 14"><rect x="1" y="6" width="10" height="7.500" fill="#9a9a9a"/><path d="M3 6V4a3 3 0 0 1 6 0v2" fill="none" stroke="#9a9a9a" stroke-width="1.500"/><circle cx="6" cy="9.500" r="1.100" fill="#535353"/></svg>
<span class="t" style="left:1828px;top:652px;font-size:12px;color:#8e8e8e;--w:27;transform:scaleX(0.880)">塗り :</span>
<div class="a" style="left:1860px;top:648px;width:56px;height:21px;background:#4d4d4d;border:1px solid #5f5f5f;border-radius:3px"></div>
<div class="a" style="left:1862px;top:650px;width:34px;height:17px;background:#474747"></div>
<div class="a" style="left:1899px;top:649px;width:1px;height:19px;background:#5f5f5f"></div>
<span class="t" style="left:1864px;top:653px;font-size:12px;color:#7e7e7e;--w:16;transform:scaleX(0.923)">0%</span>
<svg style="left:1903px;top:656px" width="9" height="6" viewBox="0 0 9 6"><path d="M1 1l3.500 3.500L8 1" stroke="#6a6a6a" stroke-width="1.200" fill="none"/></svg>
<!-- layer list -->
<div class="a" style="left:1634px;top:674px;width:286px;height:332px;background:#4b4b4b"></div>
<div class="a" style="left:1634px;top:674px;width:269px;height:153px;background:#535353"></div>
<div class="a" style="left:1664px;top:674px;width:1px;height:153px;background:#474747"></div>
<div class="a" style="left:1634px;top:699px;width:269px;height:1px;background:#474747"></div>
<div class="a" style="left:1634px;top:724px;width:269px;height:1px;background:#474747"></div>
<div class="a" style="left:1634px;top:749px;width:269px;height:1px;background:#474747"></div>
<div class="a" style="left:1634px;top:775px;width:269px;height:1px;background:#474747"></div>
<div class="a" style="left:1634px;top:801px;width:269px;height:1px;background:#474747"></div>
<div class="a" style="left:1634px;top:827px;width:269px;height:1px;background:#474747"></div>
<div class="a" style="left:1665px;top:750px;width:228px;height:25px;background:#6b6b6b"></div>
<svg style="left:1641px;top:683px" width="17" height="11" viewBox="0 0 17 11"><path d="M.5 5.500C3 1.800 6 .6 8.500.6s5.500 1.200 8 4.900c-2.500 3.700-5.500 4.900-8 4.900S3 9.200.5 5.500z" fill="#e4e4e4"/><circle cx="8.500" cy="5.500" r="2.900" fill="#3a3a3a"/><circle cx="8.500" cy="5.500" r="1.300" fill="#e4e4e4"/></svg>
<svg style="left:1641px;top:708px" width="17" height="11" viewBox="0 0 17 11"><path d="M.5 5.500C3 1.800 6 .6 8.500.6s5.500 1.200 8 4.900c-2.500 3.700-5.500 4.900-8 4.900S3 9.200.5 5.500z" fill="#e4e4e4"/><circle cx="8.500" cy="5.500" r="2.900" fill="#3a3a3a"/><circle cx="8.500" cy="5.500" r="1.300" fill="#e4e4e4"/></svg>
<svg style="left:1641px;top:733px" width="17" height="11" viewBox="0 0 17 11"><path d="M.5 5.500C3 1.800 6 .6 8.500.6s5.500 1.200 8 4.900c-2.500 3.700-5.500 4.900-8 4.900S3 9.200.5 5.500z" fill="#e4e4e4"/><circle cx="8.500" cy="5.500" r="2.900" fill="#3a3a3a"/><circle cx="8.500" cy="5.500" r="1.300" fill="#e4e4e4"/></svg>
<svg style="left:1641px;top:758px" width="17" height="11" viewBox="0 0 17 11"><path d="M.5 5.500C3 1.800 6 .6 8.500.6s5.500 1.200 8 4.900c-2.500 3.700-5.500 4.900-8 4.900S3 9.200.5 5.500z" fill="#e4e4e4"/><circle cx="8.500" cy="5.500" r="2.900" fill="#3a3a3a"/><circle cx="8.500" cy="5.500" r="1.300" fill="#e4e4e4"/></svg>
<svg style="left:1641px;top:784px" width="17" height="11" viewBox="0 0 17 11"><path d="M.5 5.500C3 1.800 6 .6 8.500.6s5.500 1.200 8 4.900c-2.500 3.700-5.500 4.900-8 4.900S3 9.200.5 5.500z" fill="#e4e4e4"/><circle cx="8.500" cy="5.500" r="2.900" fill="#3a3a3a"/><circle cx="8.500" cy="5.500" r="1.300" fill="#e4e4e4"/></svg>
<svg style="left:1641px;top:810px" width="17" height="11" viewBox="0 0 17 11"><path d="M.5 5.500C3 1.800 6 .6 8.500.6s5.500 1.200 8 4.900c-2.500 3.700-5.500 4.900-8 4.900S3 9.200.5 5.500z" fill="#e4e4e4"/><circle cx="8.500" cy="5.500" r="2.900" fill="#3a3a3a"/><circle cx="8.500" cy="5.500" r="1.300" fill="#e4e4e4"/></svg>
<svg style="left:1668px;top:683px" width="6" height="11" viewBox="0 0 6 11"><path d="M1 1l3.500 4.500L1 10" stroke="#c8c8c8" stroke-width="1.200" fill="none"/></svg>
<svg style="left:1680px;top:682px" width="15" height="12" viewBox="0 0 15 12"><path d="M0 1.500h5.500l1 1.200H15V12H0z" fill="#dedede"/><path d="M0 0h5.500v1H0z" fill="#dedede"/></svg>
<span class="t" style="left:1706px;top:682px;font-size:12px;color:#f0f0f0;--w:21;transform:scaleX(1.086)">text</span>
<svg style="left:1668px;top:708px" width="6" height="11" viewBox="0 0 6 11"><path d="M1 1l3.500 4.500L1 10" stroke="#c8c8c8" stroke-width="1.200" fill="none"/></svg>
<svg style="left:1680px;top:707px" width="15" height="12" viewBox="0 0 15 12"><path d="M0 1.500h5.500l1 1.200H15V12H0z" fill="#dedede"/><path d="M0 0h5.500v1H0z" fill="#dedede"/></svg>
<span class="t" style="left:1706px;top:707px;font-size:12px;color:#f0f0f0;--w:48;transform:scaleX(0.878)">押し出し1</span>
<svg style="left:1668px;top:733px" width="6" height="11" viewBox="0 0 6 11"><path d="M1 1l3.500 4.500L1 10" stroke="#c8c8c8" stroke-width="1.200" fill="none"/></svg>
<svg style="left:1680px;top:732px" width="15" height="12" viewBox="0 0 15 12"><path d="M0 1.500h5.500l1 1.200H15V12H0z" fill="#dedede"/><path d="M0 0h5.500v1H0z" fill="#dedede"/></svg>
<span class="t" style="left:1706px;top:732px;font-size:12px;color:#f0f0f0;--w:48;transform:scaleX(0.878)">押し出し2</span>
<svg style="left:1666px;top:752px" width="36" height="22" viewBox="0 0 36 22"><path d="M1 6V1h9M26 1h9v5M35 16v5h-9M10 21H1v-5" fill="none" stroke="#f0f0f0" stroke-width="1.300"/><path d="M12.500 19c3-3.500 8-3.500 11 0" fill="none" stroke="#f0f0f0" stroke-width="1.100"/></svg>
<span class="t" style="left:1679px;top:754px;font-family:'Liberation Serif',serif;font-size:13px;font-style:italic;color:#f0f0f0">T</span>
<span class="t" style="left:1710px;top:757px;font-size:12px;color:#f4f4f4;--w:12;transform:scaleX(1.000)">影</span>
<span class="t" style="left:1877px;top:755px;font-family:'Liberation Serif',serif;font-style:italic;font-weight:bold;font-size:14px;color:#e8e8e8;--w:11;transform:scaleX(0.942)">fx</span>
<svg style="left:1895px;top:760px" width="9" height="6" viewBox="0 0 9 6"><path d="M1 1l3.500 3.500L8 1" stroke="#c8c8c8" stroke-width="1.200" fill="none"/></svg>
<div class="a" style="left:1668px;top:780px;width:32px;height:18px;background:linear-gradient(120deg,#1a1a1a 10%,#f4f4f4 95%);border:1px solid #3a3a3a"></div>
<svg style="left:1703px;top:782px" width="8" height="14" viewBox="0 0 8 14"><rect x="1.500" y="1" width="5" height="7" rx="2.500" fill="none" stroke="#d8d8d8" stroke-width="1.300"/><rect x="1.500" y="6" width="5" height="7" rx="2.500" fill="none" stroke="#d8d8d8" stroke-width="1.300"/></svg>
<div class="a" style="left:1716px;top:780px;width:31px;height:18px;background:#fff;border:1px solid #3a3a3a"></div>
<span class="t" style="left:1757px;top:783px;font-size:12px;color:#f0f0f0;--w:73;transform:scaleX(0.776)">グラデーション 1</span>
<div class="a" style="left:1668px;top:806px;width:32px;height:18px;background:#fff;border:1px solid #3a3a3a"></div>
<span class="t" style="left:1710px;top:809px;font-size:12px;color:#f0f0f0;--w:23;transform:scaleX(0.958)">背景</span>
<svg style="left:1876px;top:808px" width="11" height="13" viewBox="0 0 11 13"><rect x=".7" y="5.200" width="9.600" height="7.100" fill="none" stroke="#e0e0e0" stroke-width="1.300"/><path d="M3 5V3.500a2.500 2.500 0 0 1 5 0V5" fill="none" stroke="#e0e0e0" stroke-width="1.300"/><rect x="4.700" y="8" width="1.600" height="2" fill="#e0e0e0"/></svg>
<div class="a" style="left:1634px;top:1006px;width:286px;height:24px;background:#535353;border-top:1px solid #474747"></div>
<svg style="left:1716px;top:1014px" width="15" height="9" viewBox="0 0 15 9"><rect x=".7" y="1.200" width="7.500" height="6.600" rx="3.300" fill="none" stroke="#a6a6a6" stroke-width="1.400"/><rect x="6.800" y="1.200" width="7.500" height="6.600" rx="3.300" fill="none" stroke="#a6a6a6" stroke-width="1.400"/></svg>
<span class="t" style="left:1745px;top:1010px;font-family:'Liberation Serif',serif;font-style:italic;font-weight:bold;font-size:15px;color:#a6a6a6;--w:11;transform:scaleX(0.880)">fx</span>
<svg style="left:1770px;top:1013px" width="14" height="11" viewBox="0 0 14 11"><rect width="14" height="11" fill="#a6a6a6"/><circle cx="7" cy="5.500" r="3.300" fill="#535353"/></svg>
<svg style="left:1799px;top:1013px" width="12" height="12" viewBox="0 0 12 12"><circle cx="6" cy="6" r="5.200" fill="none" stroke="#a6a6a6" stroke-width="1.300"/><path d="M9.700 2.300A5.200 5.200 0 0 1 2.300 9.700z" fill="#a6a6a6"/></svg>
<svg style="left:1824px;top:1013px" width="15" height="12" viewBox="0 0 15 12"><path d="M0 1.500h5.500l1 1.200H15V12H0z" fill="#a6a6a6"/><path d="M0 0h5.500v1H0z" fill="#a6a6a6"/></svg>
<svg style="left:1853px;top:1013px" width="12" height="12" viewBox="0 0 12 12"><rect x=".7" y=".7" width="10.600" height="10.600" fill="none" stroke="#a6a6a6" stroke-width="1.300"/><path d="M6 3v6M3 6h6" stroke="#a6a6a6" stroke-width="1.300"/></svg>
<svg style="left:1879px;top:1012px" width="11" height="14" viewBox="0 0 11 14"><path d="M0 2.500h11M3.500 2.500V.8h4v1.700" fill="none" stroke="#a6a6a6" stroke-width="1.300"/><path d="M1.500 4l.7 9.300h6.600L9.500 4M4 5.500v6M7 5.500v6" fill="none" stroke="#a6a6a6" stroke-width="1.300"/></svg>

<!--/RIGHT-->

<!-- ================= DIALOG ================= -->
<!--DIALOG-->
<div class="a" id="dlg" style="left:805px;top:244px;width:821px;height:521px;background:#535353;border-radius:8px;box-shadow:0 20px 44px 6px rgba(0,0,0,.31),0 1px 6px 0 rgba(0,0,0,.22);overflow:hidden">
<div class="a" style="left:0;top:0;width:821px;height:30px;background:#fff"></div>
<span class="t" style="left:8px;top:9px;font-size:12px;color:#1a1a1a;--w:73;transform:scaleX(0.760)">レイヤースタイル</span>
<svg style="left:800px;top:9px" width="11" height="11" viewBox="0 0 11 11"><path d="M.5.5l10 10M10.500.5l-10 10" stroke="#111" stroke-width="1.100"/></svg>
<div class="a" style="left:11px;top:41px;width:229px;height:470px;border:1px solid #414141"></div>
<div class="a" style="left:222px;top:42px;width:17px;height:440px;background:#4a4a4a"></div>
<div class="a" style="left:12px;top:67px;width:210px;height:1px;background:#424242"></div>
<span class="t" style="left:19px;top:49px;font-size:12px;color:#e0e0e0;--w:35;transform:scaleX(0.729)">スタイル</span>
<div class="a" style="left:12px;top:93px;width:210px;height:1px;background:#424242"></div>
<span class="t" style="left:19px;top:75px;font-size:12px;color:#e0e0e0;--w:61;transform:scaleX(0.847)">レイヤー効果</span>
<div class="a" style="left:12px;top:119px;width:210px;height:1px;background:#424242"></div>
<div class="a" style="left:17px;top:101px;width:12px;height:12px;background:#494949;border:1px solid #6c6c6c;border-radius:3px"></div>
<span class="t" style="left:35px;top:101px;font-size:12px;color:#e0e0e0;--w:75;transform:scaleX(0.781)">ベベルとエンボス</span>
<div class="a" style="left:12px;top:145px;width:210px;height:1px;background:#424242"></div>
<div class="a" style="left:27px;top:127px;width:12px;height:12px;background:#494949;border:1px solid #6c6c6c;border-radius:3px"></div>
<span class="t" style="left:45px;top:127px;font-size:12px;color:#e0e0e0;--w:22;transform:scaleX(0.917)">輪郭</span>
<div class="a" style="left:12px;top:171px;width:210px;height:1px;background:#424242"></div>
<div class="a" style="left:27px;top:153px;width:12px;height:12px;background:#494949;border:1px solid #6c6c6c;border-radius:3px"></div>
<span class="t" style="left:45px;top:153px;font-size:12px;color:#e0e0e0;--w:43;transform:scaleX(0.717)">テクスチャ</span>
<div class="a" style="left:12px;top:197px;width:210px;height:1px;background:#424242"></div>
<div class="a" style="left:17px;top:179px;width:12px;height:12px;background:#494949;border:1px solid #6c6c6c;border-radius:3px"></div>
<span class="t" style="left:35px;top:179px;font-size:12px;color:#e0e0e0;--w:34;transform:scaleX(0.944)">境界線</span>
<svg style="left:203px;top:178px" width="15" height="15" viewBox="0 0 15 15"><rect x=".7" y=".7" width="13.600" height="13.600" fill="none" stroke="#e6e6e6" stroke-width="1.200"/><path d="M7.500 3.500v8M3.500 7.500h8" stroke="#f0f0f0" stroke-width="1.800"/></svg>
<div class="a" style="left:12px;top:223px;width:210px;height:1px;background:#424242"></div>
<div class="a" style="left:17px;top:205px;width:12px;height:12px;background:#494949;border:1px solid #6c6c6c;border-radius:3px"></div>
<span class="t" style="left:35px;top:205px;font-size:12px;color:#e0e0e0;--w:72;transform:scaleX(0.864)">シャドウ (内側)</span>
<svg style="left:203px;top:204px" width="15" height="15" viewBox="0 0 15 15"><rect x=".7" y=".7" width="13.600" height="13.600" fill="none" stroke="#e6e6e6" stroke-width="1.200"/><path d="M7.500 3.500v8M3.500 7.500h8" stroke="#f0f0f0" stroke-width="1.800"/></svg>
<div class="a" style="left:12px;top:249px;width:210px;height:1px;background:#424242"></div>
<div class="a" style="left:17px;top:231px;width:12px;height:12px;background:#494949;border:1px solid #6c6c6c;border-radius:3px"></div>
<span class="t" style="left:35px;top:231px;font-size:12px;color:#e0e0e0;--w:61;transform:scaleX(1.028)">光彩 (内側)</span>
<div class="a" style="left:12px;top:275px;width:210px;height:1px;background:#424242"></div>
<div class="a" style="left:17px;top:257px;width:12px;height:12px;background:#494949;border:1px solid #6c6c6c;border-radius:3px"></div>
<span class="t" style="left:35px;top:257px;font-size:12px;color:#e0e0e0;--w:28;transform:scaleX(0.778)">サテン</span>
<div class="a" style="left:12px;top:276px;width:210px;height:25px;background:#6b6b6b"></div>
<div class="a" style="left:12px;top:301px;width:210px;height:1px;background:#424242"></div>
<div class="a" style="left:17px;top:283px;width:12px;height:12px;background:#efefef;border-radius:2.500px"></div>
<svg style="left:18px;top:285px" width="10" height="8" viewBox="0 0 10 8"><path d="M1 4l2.800 2.800L9 1.200" stroke="#1a1a1a" stroke-width="2" fill="none"/></svg>
<span class="t" style="left:35px;top:283px;font-size:12px;color:#ffffff;--w:82;transform:scaleX(0.759)">カラーオーバーレイ</span>
<svg style="left:203px;top:282px" width="15" height="15" viewBox="0 0 15 15"><rect x=".7" y=".7" width="13.600" height="13.600" fill="none" stroke="#e6e6e6" stroke-width="1.200"/><path d="M7.500 3.500v8M3.500 7.500h8" stroke="#f0f0f0" stroke-width="1.800"/></svg>
<div class="a" style="left:12px;top:327px;width:210px;height:1px;background:#424242"></div>
<div class="a" style="left:17px;top:309px;width:12px;height:12px;background:#494949;border:1px solid #6c6c6c;border-radius:3px"></div>
<span class="t" style="left:35px;top:309px;font-size:12px;color:#e0e0e0;--w:117;transform:scaleX(0.750)">グラデーションオーバーレイ</span>
<svg style="left:203px;top:308px" width="15" height="15" viewBox="0 0 15 15"><rect x=".7" y=".7" width="13.600" height="13.600" fill="none" stroke="#e6e6e6" stroke-width="1.200"/><path d="M7.500 3.500v8M3.500 7.500h8" stroke="#f0f0f0" stroke-width="1.800"/></svg>
<div class="a" style="left:12px;top:353px;width:210px;height:1px;background:#424242"></div>
<div class="a" style="left:17px;top:335px;width:12px;height:12px;background:#494949;border:1px solid #6c6c6c;border-radius:3px"></div>
<span class="t" style="left:35px;top:335px;font-size:12px;color:#e0e0e0;--w:92;transform:scaleX(0.767)">パターンオーバーレイ</span>
<div class="a" style="left:12px;top:379px;width:210px;height:1px;background:#424242"></div>
<div class="a" style="left:17px;top:361px;width:12px;height:12px;background:#494949;border:1px solid #6c6c6c;border-radius:3px"></div>
<span class="t" style="left:35px;top:361px;font-size:12px;color:#e0e0e0;--w:61;transform:scaleX(1.028)">光彩 (外側)</span>
<div class="a" style="left:12px;top:405px;width:210px;height:1px;background:#424242"></div>
<div class="a" style="left:17px;top:387px;width:12px;height:12px;background:#494949;border:1px solid #6c6c6c;border-radius:3px"></div>
<span class="t" style="left:35px;top:387px;font-size:12px;color:#e0e0e0;--w:70;transform:scaleX(0.729)">ドロップシャドウ</span>
<svg style="left:203px;top:386px" width="15" height="15" viewBox="0 0 15 15"><rect x=".7" y=".7" width="13.600" height="13.600" fill="none" stroke="#e6e6e6" stroke-width="1.200"/><path d="M7.500 3.500v8M3.500 7.500h8" stroke="#f0f0f0" stroke-width="1.800"/></svg>
<span class="t" style="left:21px;top:489px;font-style:italic;font-size:14px;color:#e0e0e0;--w:12;transform:scaleX(1.102)">fx</span>
<svg style="left:31px;top:502px" width="4" height="3" viewBox="0 0 4 3"><path d="M0 0h4L2 3z" fill="#e0e0e0"/></svg>
<svg style="left:46px;top:492px" width="12" height="11" viewBox="0 0 12 11"><path d="M6 0l6 6H8.500v5h-5V6H0z" fill="#8a8a8a"/></svg>
<svg style="left:73px;top:492px" width="12" height="11" viewBox="0 0 12 11"><path d="M6 11l6-6H8.500V0h-5v5H0z" fill="#8a8a8a"/></svg>
<svg style="left:217px;top:491px" width="11" height="13" viewBox="0 0 11 13"><path d="M0 2.500h11M3.500 2.500V.8h4v1.700" fill="none" stroke="#e0e0e0" stroke-width="1.200"/><path d="M1.500 4l.6 8.300h6.800L9.500 4M4 5.500v5.500M7 5.500v5.500" fill="none" stroke="#e0e0e0" stroke-width="1.200"/></svg>
<div class="a" style="left:256px;top:47px;width:406px;height:464px;border:1px solid #444"></div>
<div class="a" style="left:273px;top:40px;width:92px;height:14px;background:#535353"></div>
<span class="t" style="left:277px;top:41px;font-size:12px;color:#e4e4e4;--w:84;transform:scaleX(0.778)">カラーオーバーレイ</span>
<div class="a" style="left:266px;top:62px;width:386px;height:71px;border:1px solid #444"></div>
<div class="a" style="left:282px;top:55px;width:44px;height:14px;background:#535353"></div>
<span class="t" style="left:286px;top:56px;font-size:12px;color:#e4e4e4;--w:35;transform:scaleX(0.972)">表示色</span>
<span class="t" style="left:301px;top:80px;font-size:12px;color:#e0e0e0;--w:59;transform:scaleX(0.885)">描画モード :</span>
<div class="a" style="left:367px;top:78px;width:145px;height:21px;background:#474747;border:1px solid #5d5d5d;border-radius:3px"></div>
<span class="t" style="left:376px;top:82px;font-size:12px;color:#f0f0f0;--w:22;transform:scaleX(0.917)">乗算</span>
<svg style="left:501px;top:87px" width="8" height="5" viewBox="0 0 8 5"><path d="M.8.800l3.200 3.200L7.200.8" stroke="#a0a0a0" stroke-width="1.100" fill="none"/></svg>
<div class="a" style="left:516px;top:75px;width:36px;height:24px;background:#893700;border:1px solid #3a3a3a"></div>
<span class="t" style="left:288px;top:108px;font-size:12px;color:#e0e0e0;--w:72;transform:scaleX(1.000)">不透明度(O) :</span>
<div class="a" style="left:373px;top:110px;width:96px;height:2px;background:#6e6e6e"></div>
<svg style="left:414px;top:112px" width="13" height="10" viewBox="0 0 13 10"><path d="M6.500.5L12 7.500c.5 1-.2 2-1.200 2H2.200c-1 0-1.700-1-1.200-2z" fill="#f4f4f4" stroke="#3c3c3c" stroke-width=".6"/></svg>
<div class="a" style="left:478px;top:104px;width:40px;height:20px;background:#474747;border:1px solid #626262"></div>
<span class="t" style="left:482px;top:109px;font-size:11px;color:#f0f0f0;--w:11;transform:scaleX(0.898)">50</span>
<span class="t" style="left:523px;top:109px;font-size:11px;color:#e0e0e0;--w:9;transform:scaleX(0.920)">%</span>
<div class="a" style="left:348px;top:140px;width:103px;height:23px;background:#4b4b4b;border:1px solid #3e3e3e;border-radius:3px"></div>
<span class="t" style="left:360px;top:146px;font-size:12px;color:#e6e6e6;--w:79;transform:scaleX(0.940)">初期設定にする</span>
<div class="a" style="left:462px;top:140px;width:106px;height:23px;background:#4b4b4b;border:1px solid #3e3e3e;border-radius:3px"></div>
<span class="t" style="left:474px;top:146px;font-size:12px;color:#e6e6e6;--w:81;transform:scaleX(0.964)">初期設定に戻す</span>
<div class="a" style="left:677px;top:42px;width:134px;height:26px;border:2px solid #3d78d6;border-radius:13px"></div>
<span class="t" style="left:736px;top:49px;font-size:12px;color:#f0f0f0;--w:17;transform:scaleX(0.980)">OK</span>
<div class="a" style="left:677px;top:76px;width:134px;height:25px;border:1px solid #7c7c7c;border-radius:13px"></div>
<span class="t" style="left:717px;top:83px;font-size:12px;color:#f0f0f0;--w:52;transform:scaleX(0.867)">キャンセル</span>
<div class="a" style="left:677px;top:111px;width:134px;height:25px;border:1px solid #7c7c7c;border-radius:13px"></div>
<span class="t" style="left:694px;top:118px;font-size:12px;color:#f0f0f0;--w:100;transform:scaleX(0.987)">新規スタイル(W)...</span>
<div class="a" style="left:691px;top:148px;width:13px;height:13px;background:#efefef;border-radius:2.500px"></div>
<svg style="left:693px;top:150px" width="10" height="8" viewBox="0 0 10 8"><path d="M1 4l2.800 2.800L9 1.200" stroke="#1a1a1a" stroke-width="2" fill="none"/></svg>
<span class="t" style="left:712px;top:148px;font-size:12px;color:#f0f0f0;--w:65;transform:scaleX(0.855)">プレビュー(V)</span>
<div class="a" style="left:679px;top:172px;width:130px;height:130px;background:#2e2e2e"></div>
<div class="a" style="left:712px;top:205px;width:64px;height:64px;background:#241c19"></div>
</div>

<!--/DIALOG-->

<!-- ================= ANNOTATIONS ================= -->
<!--ANN-->
<!-- connector lines -->
<svg style="left:0;top:0" width="1920" height="1032" viewBox="0 0 1920 1032"><g stroke="#ff0000" stroke-width="2" fill="none"><path d="M917.500 233L927.700 410"/><path d="M1348 351L1300.300 498"/><path d="M1802.500 440L1833.300 610"/></g></svg>
<!-- outline rectangles -->
<div class="rr" style="left:807px;top:409px;width:230px;height:37px"></div>
<div class="rr" style="left:807px;top:515px;width:233px;height:38px"></div>
<div class="rr" style="left:1056px;top:277px;width:334px;height:144px"></div>
<div class="rr" style="left:1312px;top:308px;width:57px;height:43px"></div>
<div class="rr" style="left:1789px;top:609px;width:125px;height:62px"></div>
<div class="rr" style="left:1631px;top:743px;width:282px;height:38px"></div>
<!-- annotation boxes -->
<div class="ann" style="left:778px;top:164px;width:273px;height:70px"></div>
<span class="t" style="left:813px;top:181px;font-size:34px;color:#ff0000;--w:196;transform:scaleX(0.938)">チェック外す</span>
<div class="ann" style="left:1113px;top:497px;width:277px;height:65px"></div>
<span class="t" style="left:1170px;top:509px;font-size:42.500px;color:#ff0000;--w:163;transform:scaleX(0.985)">#893700</span>
<div class="ann" style="left:1644px;top:250px;width:265px;height:191px"></div>
<span class="t" style="left:1666px;top:297px;font-size:34px;color:#ff0000;--w:219;transform:scaleX(1.026)">不透明度:90%</span>
<span class="t" style="left:1773px;top:360px;font-size:34px;color:#ff0000;--w:112;transform:scaleX(0.878)">塗り:0%</span>

<!--/ANN-->
<div class="a" id="bottomline"></div>
</body>
</html>
